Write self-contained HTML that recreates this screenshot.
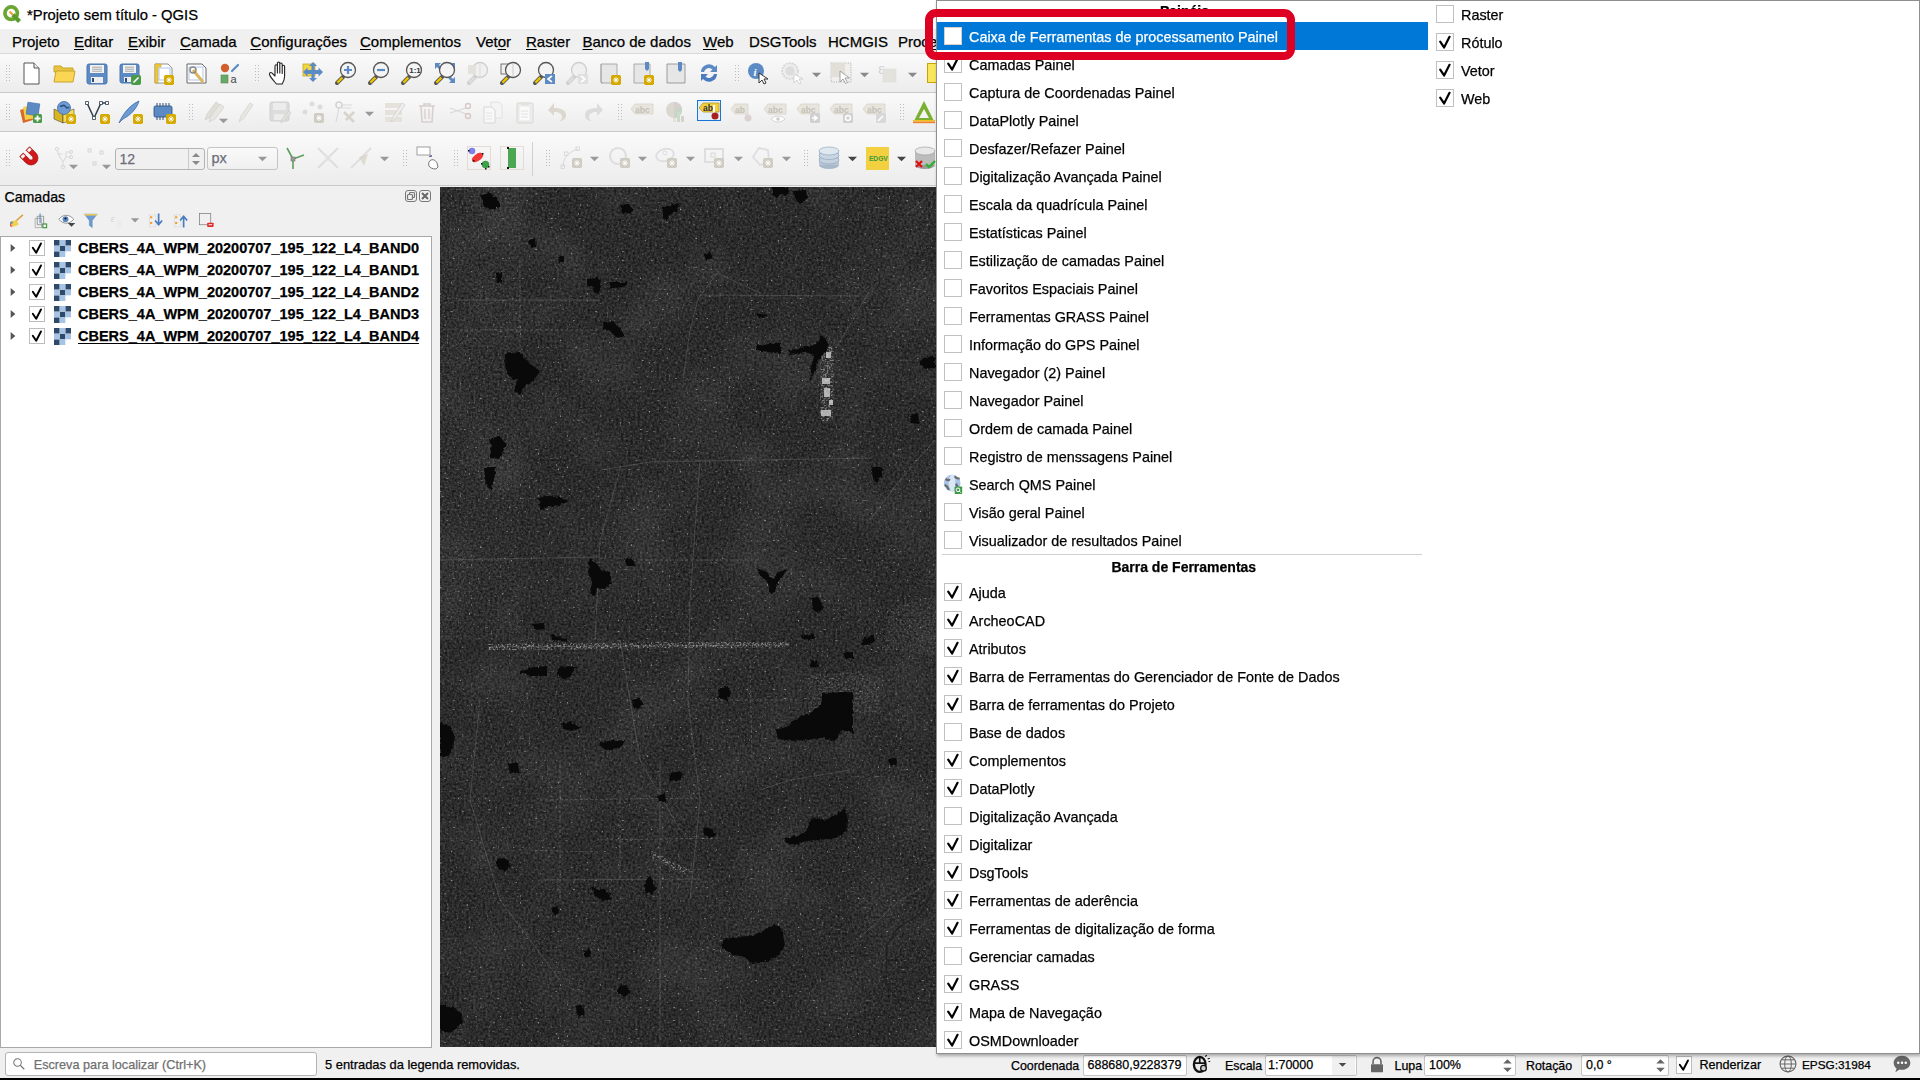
<!DOCTYPE html>
<html><head><meta charset="utf-8"><title>QGIS</title>
<style>
html,body{margin:0;padding:0;width:1920px;height:1080px;overflow:hidden;background:#f0f0f0;position:relative}
body{font-family:"Liberation Sans",sans-serif}
.t{position:absolute;white-space:nowrap;-webkit-text-stroke:0.25px currentColor}
.cb{position:absolute;background:#fff;border:1px solid #bdbdbd;box-sizing:border-box}
svg{position:absolute;overflow:visible}
</style></head><body>
<div style="position:absolute;left:0px;top:0px;width:1920px;height:29px;background:#fff"></div>
<svg style="left:1.50px;top:4.00px;" width="20" height="20" viewBox="0 0 24 24"><circle cx="11" cy="11" r="7.5" fill="none" stroke="#6aa632" stroke-width="4.5"/><path d="M13 13l8 8" stroke="#5a9a2a" stroke-width="5"/><path d="M9 9l4 4" stroke="#f0a030" stroke-width="2.5"/></svg>
<div class="t" style="left:27px;top:7.67px;font-size:14.8px;line-height:14.8px;color:#000;font-weight:400;">*Projeto sem título - QGIS</div>
<div style="position:absolute;left:0px;top:29px;width:1920px;height:24px;background:#f0f0f0"></div>
<div class="t" style="left:12px;top:33.80px;font-size:15px;line-height:15px;color:#000;font-weight:400;text-decoration-thickness:1px;text-underline-offset:2px;">Pro<u>j</u>eto</div>
<div class="t" style="left:74px;top:33.80px;font-size:15px;line-height:15px;color:#000;font-weight:400;text-decoration-thickness:1px;text-underline-offset:2px;"><u>E</u>ditar</div>
<div class="t" style="left:128px;top:33.80px;font-size:15px;line-height:15px;color:#000;font-weight:400;text-decoration-thickness:1px;text-underline-offset:2px;"><u>E</u>xibir</div>
<div class="t" style="left:180px;top:33.80px;font-size:15px;line-height:15px;color:#000;font-weight:400;text-decoration-thickness:1px;text-underline-offset:2px;"><u>C</u>amada</div>
<div class="t" style="left:250.3px;top:33.80px;font-size:15px;line-height:15px;color:#000;font-weight:400;text-decoration-thickness:1px;text-underline-offset:2px;"><u>C</u>onfigurações</div>
<div class="t" style="left:360px;top:33.80px;font-size:15px;line-height:15px;color:#000;font-weight:400;text-decoration-thickness:1px;text-underline-offset:2px;"><u>C</u>omplementos</div>
<div class="t" style="left:476px;top:33.80px;font-size:15px;line-height:15px;color:#000;font-weight:400;text-decoration-thickness:1px;text-underline-offset:2px;">Vet<u>o</u>r</div>
<div class="t" style="left:526px;top:33.80px;font-size:15px;line-height:15px;color:#000;font-weight:400;text-decoration-thickness:1px;text-underline-offset:2px;"><u>R</u>aster</div>
<div class="t" style="left:582.5px;top:33.80px;font-size:15px;line-height:15px;color:#000;font-weight:400;text-decoration-thickness:1px;text-underline-offset:2px;"><u>B</u>anco de dados</div>
<div class="t" style="left:703px;top:33.80px;font-size:15px;line-height:15px;color:#000;font-weight:400;text-decoration-thickness:1px;text-underline-offset:2px;"><u>W</u>eb</div>
<div class="t" style="left:749px;top:33.80px;font-size:15px;line-height:15px;color:#000;font-weight:400;text-decoration-thickness:1px;text-underline-offset:2px;">DSGTools</div>
<div class="t" style="left:828px;top:33.80px;font-size:15px;line-height:15px;color:#000;font-weight:400;text-decoration-thickness:1px;text-underline-offset:2px;">HCMGIS</div>
<div class="t" style="left:898px;top:33.80px;font-size:15px;line-height:15px;color:#000;font-weight:400;text-decoration-thickness:1px;text-underline-offset:2px;">Proc<u>e</u>ssar</div>
<div style="position:absolute;left:0px;top:53px;width:1920px;height:1px;background:#dadada"></div>
<div style="position:absolute;left:0px;top:54px;width:1920px;height:38px;background:linear-gradient(#fafafa,#ececec)"></div>
<div style="position:absolute;left:0px;top:92px;width:1920px;height:1px;background:#c9c9c9"></div>
<div style="position:absolute;left:0px;top:93px;width:1920px;height:38px;background:linear-gradient(#fafafa,#ececec)"></div>
<div style="position:absolute;left:0px;top:131px;width:1920px;height:1px;background:#c9c9c9"></div>
<div style="position:absolute;left:0px;top:132px;width:1920px;height:53px;background:linear-gradient(#fafafa,#ececec)"></div>
<div style="position:absolute;left:0px;top:185px;width:1920px;height:1px;background:#c9c9c9"></div>
<div style="position:absolute;left:6px;top:64.5px;width:1px;height:1px;background:#bcbcbc"></div><div style="position:absolute;left:6px;top:67.5px;width:1px;height:1px;background:#bcbcbc"></div><div style="position:absolute;left:6px;top:70.5px;width:1px;height:1px;background:#bcbcbc"></div><div style="position:absolute;left:6px;top:73.5px;width:1px;height:1px;background:#bcbcbc"></div><div style="position:absolute;left:6px;top:76.5px;width:1px;height:1px;background:#bcbcbc"></div><div style="position:absolute;left:6px;top:79.5px;width:1px;height:1px;background:#bcbcbc"></div><div style="position:absolute;left:9px;top:64.5px;width:1px;height:1px;background:#bcbcbc"></div><div style="position:absolute;left:9px;top:67.5px;width:1px;height:1px;background:#bcbcbc"></div><div style="position:absolute;left:9px;top:70.5px;width:1px;height:1px;background:#bcbcbc"></div><div style="position:absolute;left:9px;top:73.5px;width:1px;height:1px;background:#bcbcbc"></div><div style="position:absolute;left:9px;top:76.5px;width:1px;height:1px;background:#bcbcbc"></div><div style="position:absolute;left:9px;top:79.5px;width:1px;height:1px;background:#bcbcbc"></div>
<svg style="left:19.00px;top:61.00px;" width="24" height="24" viewBox="0 0 24 24"><path d="M5 2h10l5 5v16H5z" fill="#fff" stroke="#555" stroke-width="1"/><path d="M15 2v5h5" fill="#eee" stroke="#555" stroke-width="1"/></svg>
<svg style="left:52.00px;top:61.00px;" width="24" height="24" viewBox="0 0 24 24"><path d="M2 5h7l2 2h10v4H2z" fill="#e8c440" stroke="#c9a42a"/><path d="M2 21l2-11h19l-2 11z" fill="#fad654" stroke="#c9a42a"/></svg>
<svg style="left:85.00px;top:61.00px;" width="24" height="24" viewBox="0 0 24 24"><rect x="2" y="3" width="20" height="20" rx="2" fill="#5b8ac4" stroke="#4a76ae"/><rect x="5" y="4" width="14" height="8" fill="#f2f2f2"/><path d="M7 6.2h10M7 8.2h10M7 10.2h10" stroke="#777" stroke-width="0.6"/><rect x="6" y="16" width="12" height="6" fill="#eee"/><rect x="7" y="17" width="2" height="4" fill="#2d4d7a"/></svg>
<svg style="left:118.00px;top:61.00px;" width="24" height="24" viewBox="0 0 24 24"><rect x="2" y="3" width="19" height="19" rx="2" fill="#5b8ac4" stroke="#4a76ae"/><rect x="5" y="4" width="13" height="8" fill="#f2f2f2"/><path d="M7 6.2h9M7 8.2h9M7 10.2h9" stroke="#777" stroke-width="0.6"/><rect x="6" y="16" width="11" height="5" fill="#eee"/><rect x="7" y="17" width="2" height="4" fill="#2d4d7a"/><rect x="13" y="14" width="10" height="10" rx="2" fill="#4a9a4a"/><path d="M15.5 21.5l5-5" stroke="#fff" stroke-width="1.6"/></svg>
<svg style="left:151.00px;top:61.00px;" width="24" height="24" viewBox="0 0 24 24"><path d="M4 3h13l4 4v15H4z" fill="#fff" stroke="#777" stroke-width="0.8"/><path d="M4 3h6v3h-3v16H4z" fill="#efc83a" stroke="#c9a42a" stroke-width="0.6"/><rect x="8" y="7" width="11" height="12" fill="none" stroke="#9cb8e4" stroke-width="0.8"/><rect x="13" y="14" width="10" height="10" rx="1.8" fill="#d4a900"/><path d="M18 16v6M15 19h6M15.9 16.9l4.2 4.2M15.9 21.1l4.2 -4.2" stroke="#fff" stroke-width="0.9" fill="none"/></svg>
<svg style="left:184.00px;top:61.00px;" width="24" height="24" viewBox="0 0 24 24"><path d="M3 3h15l4 4v15H3z" fill="#fff" stroke="#666" stroke-width="1"/><rect x="5" y="6" width="14" height="13" fill="none" stroke="#9cb8e4" stroke-width="0.8"/><path d="M9 9l10 12" stroke="#d9b55c" stroke-width="3"/><circle cx="9" cy="9" r="3" fill="none" stroke="#888" stroke-width="1.4"/></svg>
<svg style="left:217.00px;top:61.00px;" width="24" height="24" viewBox="0 0 24 24"><circle cx="8" cy="7" r="4.2" fill="#d3602c"/><path d="M15 10l6-6" stroke="#5b8ac4" stroke-width="2.2" stroke-linecap="round"/><rect x="4" y="14" width="7" height="8" fill="#6aa86a" stroke="#4a8a4a" stroke-width="0.6"/><text x="13.5" y="22" font-size="11" font-family="Liberation Sans" fill="#444">a</text></svg>

<div style="position:absolute;left:255px;top:64.5px;width:1px;height:1px;background:#bcbcbc"></div><div style="position:absolute;left:255px;top:67.5px;width:1px;height:1px;background:#bcbcbc"></div><div style="position:absolute;left:255px;top:70.5px;width:1px;height:1px;background:#bcbcbc"></div><div style="position:absolute;left:255px;top:73.5px;width:1px;height:1px;background:#bcbcbc"></div><div style="position:absolute;left:255px;top:76.5px;width:1px;height:1px;background:#bcbcbc"></div><div style="position:absolute;left:255px;top:79.5px;width:1px;height:1px;background:#bcbcbc"></div><div style="position:absolute;left:258px;top:64.5px;width:1px;height:1px;background:#bcbcbc"></div><div style="position:absolute;left:258px;top:67.5px;width:1px;height:1px;background:#bcbcbc"></div><div style="position:absolute;left:258px;top:70.5px;width:1px;height:1px;background:#bcbcbc"></div><div style="position:absolute;left:258px;top:73.5px;width:1px;height:1px;background:#bcbcbc"></div><div style="position:absolute;left:258px;top:76.5px;width:1px;height:1px;background:#bcbcbc"></div><div style="position:absolute;left:258px;top:79.5px;width:1px;height:1px;background:#bcbcbc"></div>
<svg style="left:268.00px;top:61.00px;" width="24" height="24" viewBox="0 0 24 24"><path d="M8.5 23c-2.5-3-6-6.5-7-9.5-.4-1.6 1.2-2.6 2.6-1.4L7 15V5c0-1.6 2.4-1.6 2.4 0v7V2.2c0-1.6 2.4-1.6 2.4 0V12V3.2c0-1.6 2.4-1.6 2.4 0V12.5V5.5c0-1.6 2.4-1.6 2.4 0v9.5c0 3.5-1.2 6-2.4 8z" fill="#fff" stroke="#222" stroke-width="1.1" stroke-linejoin="round"/></svg>
<svg style="left:301.00px;top:61.00px;" width="24" height="24" viewBox="0 0 24 24"><rect x="2" y="3" width="12" height="12" fill="#f2d640" stroke="#c9a42a" stroke-width="0.8"/><path d="M12 1l4 4h-2.5v4h4V6.5L22 11l-4.5 4.5V13h-4v4H16l-4 4-4-4h2.5v-4h-4v2.5L2 11l4.5-4.5V9h4V5H8z" fill="#5b8ac4"/></svg>
<svg style="left:334.00px;top:61.00px;" width="24" height="24" viewBox="0 0 24 24"><path d="M3 22l6-6" stroke="#555" stroke-width="4" stroke-linecap="round"/><path d="M3.4 21.6l5-5" stroke="#e8c200" stroke-width="2.4"/><circle cx="14" cy="9" r="7.5" fill="#f4f4f4" stroke="#555" stroke-width="1.3"/><path d="M14 5v8M10 9h8" stroke="#5b8ac4" stroke-width="2.2"/></svg>
<svg style="left:367.00px;top:61.00px;" width="24" height="24" viewBox="0 0 24 24"><path d="M3 22l6-6" stroke="#555" stroke-width="4" stroke-linecap="round"/><path d="M3.4 21.6l5-5" stroke="#e8c200" stroke-width="2.4"/><circle cx="14" cy="9" r="7.5" fill="#f4f4f4" stroke="#555" stroke-width="1.3"/><path d="M10 9h8" stroke="#5b8ac4" stroke-width="2.2"/></svg>
<svg style="left:400.00px;top:61.00px;" width="24" height="24" viewBox="0 0 24 24"><path d="M3 22l6-6" stroke="#555" stroke-width="4" stroke-linecap="round"/><path d="M3.4 21.6l5-5" stroke="#e8c200" stroke-width="2.4"/><circle cx="14" cy="9" r="7.5" fill="#f4f4f4" stroke="#555" stroke-width="1.3"/><text x="9.2" y="12.3" font-size="8" font-weight="700" font-family="Liberation Sans" fill="#333">1:1</text></svg>
<svg style="left:433.00px;top:61.00px;" width="24" height="24" viewBox="0 0 24 24"><path d="M2 2h6l-2 2 3 3-2 2-3-3-2 2zM22 2v6l-2-2-3 3-2-2 3-3-2-2zM22 22h-6l2-2-3-3 2-2 3 3 2-2z" fill="#5b8ac4"/><path d="M3 22l6-6" stroke="#555" stroke-width="4" stroke-linecap="round"/><path d="M3.4 21.6l5-5" stroke="#e8c200" stroke-width="2.4"/><circle cx="14" cy="9" r="7.5" fill="#f4f4f4" stroke="#555" stroke-width="1.3"/></svg>
<svg style="left:466.00px;top:61.00px;" width="24" height="24" viewBox="0 0 24 24"><path d="M3 22l6-6" stroke="#cfcfcf" stroke-width="4" stroke-linecap="round"/><path d="M3.4 21.6l5-5" stroke="#dedede" stroke-width="2.4"/><circle cx="14" cy="9" r="7.5" fill="#f0f0f0" stroke="#cfcfcf" stroke-width="1.3"/><rect x="2" y="4" width="8" height="9" fill="#e4e2dc"/><path d="M14 2v14" stroke="#ddd"/></svg>
<svg style="left:499.00px;top:61.00px;" width="24" height="24" viewBox="0 0 24 24"><rect x="2" y="3" width="9" height="10" fill="#f0f0f0" stroke="#555" stroke-width="0.8"/><path d="M3 22l6-6" stroke="#555" stroke-width="4" stroke-linecap="round"/><path d="M3.4 21.6l5-5" stroke="#e8c200" stroke-width="2.4"/><circle cx="14" cy="9" r="7.5" fill="#f4f4f4" stroke="#555" stroke-width="1.3"/><path d="M14 2v14" stroke="#ccc"/></svg>
<svg style="left:532.00px;top:61.00px;" width="24" height="24" viewBox="0 0 24 24"><path d="M3 22l6-6" stroke="#555" stroke-width="4" stroke-linecap="round"/><path d="M3.4 21.6l5-5" stroke="#e8c200" stroke-width="2.4"/><circle cx="14" cy="9" r="7.5" fill="#f4f4f4" stroke="#555" stroke-width="1.3"/><rect x="13" y="13" width="10" height="10" fill="#5b8ac4"/><path d="M20 15l-4 3 4 3" stroke="#fff" stroke-width="1.6" fill="none"/></svg>
<svg style="left:565.00px;top:61.00px;" width="24" height="24" viewBox="0 0 24 24"><path d="M3 22l6-6" stroke="#cfcfcf" stroke-width="4" stroke-linecap="round"/><path d="M3.4 21.6l5-5" stroke="#dedede" stroke-width="2.4"/><circle cx="14" cy="9" r="7.5" fill="#f0f0f0" stroke="#cfcfcf" stroke-width="1.3"/><rect x="13" y="13" width="10" height="10" fill="#e0e0e0"/><path d="M16 15l4 3-4 3" stroke="#fff" stroke-width="1.6" fill="none"/></svg>
<svg style="left:598.00px;top:61.00px;" width="24" height="24" viewBox="0 0 24 24"><path d="M3 3h16v19H3z" fill="#e6e6e6" stroke="#999" stroke-width="0.8"/><path d="M3 3v17c0 1 1 2 2 2" fill="none" stroke="#aaa"/><rect x="13" y="14" width="10" height="10" rx="1.8" fill="#d4a900"/><path d="M18 16v6M15 19h6M15.9 16.9l4.2 4.2M15.9 21.1l4.2 -4.2" stroke="#fff" stroke-width="0.9" fill="none"/></svg>
<svg style="left:631.00px;top:61.00px;" width="24" height="24" viewBox="0 0 24 24"><path d="M3 3h16v19H3z" fill="#e6e6e6" stroke="#999" stroke-width="0.8"/><path d="M14 1h4v7l-2 2-2-2z" fill="#5b8ac4"/><rect x="13" y="14" width="10" height="10" rx="1.8" fill="#d4a900"/><path d="M18 16v6M15 19h6M15.9 16.9l4.2 4.2M15.9 21.1l4.2 -4.2" stroke="#fff" stroke-width="0.9" fill="none"/></svg>
<svg style="left:664.00px;top:61.00px;" width="24" height="24" viewBox="0 0 24 24"><path d="M3 3h18v19H3z" fill="#e6e6e6" stroke="#888" stroke-width="0.8"/><path d="M14 1h4v8l-2 2-2-2z" fill="#5b8ac4"/></svg>
<svg style="left:697.00px;top:61.00px;" width="24" height="24" viewBox="0 0 24 24"><path d="M4 11a8 8 0 0 1 14-5l2-2v7h-7l2.5-2.5A5 5 0 0 0 7 11z" fill="#5b8ac4"/><path d="M20 13a8 8 0 0 1-14 5l-2 2v-7h7l-2.5 2.5A5 5 0 0 0 17 13z" fill="#4a7bc0"/></svg>
<div style="position:absolute;left:735px;top:64.5px;width:1px;height:1px;background:#bcbcbc"></div><div style="position:absolute;left:735px;top:67.5px;width:1px;height:1px;background:#bcbcbc"></div><div style="position:absolute;left:735px;top:70.5px;width:1px;height:1px;background:#bcbcbc"></div><div style="position:absolute;left:735px;top:73.5px;width:1px;height:1px;background:#bcbcbc"></div><div style="position:absolute;left:735px;top:76.5px;width:1px;height:1px;background:#bcbcbc"></div><div style="position:absolute;left:735px;top:79.5px;width:1px;height:1px;background:#bcbcbc"></div><div style="position:absolute;left:738px;top:64.5px;width:1px;height:1px;background:#bcbcbc"></div><div style="position:absolute;left:738px;top:67.5px;width:1px;height:1px;background:#bcbcbc"></div><div style="position:absolute;left:738px;top:70.5px;width:1px;height:1px;background:#bcbcbc"></div><div style="position:absolute;left:738px;top:73.5px;width:1px;height:1px;background:#bcbcbc"></div><div style="position:absolute;left:738px;top:76.5px;width:1px;height:1px;background:#bcbcbc"></div><div style="position:absolute;left:738px;top:79.5px;width:1px;height:1px;background:#bcbcbc"></div>
<svg style="left:747.00px;top:61.00px;" width="24" height="24" viewBox="0 0 24 24"><circle cx="9" cy="10" r="8" fill="#5b8ac4"/><text x="6.5" y="15" font-size="11" font-style="italic" font-weight="700" font-family="Liberation Serif" fill="#fff">i</text><path d="M12 12l0 10 3-3 2 4 2-1-2-4h4z" fill="#fff" stroke="#222" stroke-width="0.9"/></svg>
<svg style="left:780.00px;top:61.00px;" width="24" height="24" viewBox="0 0 24 24"><circle cx="10" cy="10" r="8" fill="#ececec" stroke="#d4d4d4" stroke-width="1.5" stroke-dasharray="2 1"/><circle cx="10" cy="10" r="4.5" fill="#dcdcdc"/><path d="M14 13l0 9 3-3 2 4 2-1-2-4h4z" fill="#fff" stroke="#d0d0d0" stroke-width="0.9"/></svg>
<svg style="left:810.50px;top:68.50px;color:#8a8a8a;" width="11" height="11" viewBox="0 0 24 24"><path d="M2 8h20l-10 10z" fill="currentColor"/></svg>
<svg style="left:829.00px;top:61.00px;" width="24" height="24" viewBox="0 0 24 24"><rect x="2" y="2" width="20" height="19" fill="#f0efeb" stroke="#aaa" stroke-width="0.8" stroke-dasharray="1.2 1.2"/><rect x="2" y="2" width="14" height="14" fill="#e2dfd8"/><path d="M11 10l0 11 3-3 2.5 4.5 2-1L16 17h4.5z" fill="#fff" stroke="#999" stroke-width="0.9"/></svg>
<svg style="left:859.00px;top:68.50px;color:#8a8a8a;" width="11" height="11" viewBox="0 0 24 24"><path d="M2 8h20l-10 10z" fill="currentColor"/></svg>
<svg style="left:877.00px;top:61.00px;" width="24" height="24" viewBox="0 0 24 24"><text x="1" y="13" font-size="16" font-family="Liberation Serif" fill="#d0d0d0">&#949;</text><rect x="6" y="8" width="13" height="13" fill="#e4e2dc" stroke="#ddd" stroke-width="0.6"/></svg>
<svg style="left:907.10px;top:68.50px;color:#8a8a8a;" width="11" height="11" viewBox="0 0 24 24"><path d="M2 8h20l-10 10z" fill="currentColor"/></svg>
<div style="position:absolute;left:927px;top:63px;width:10px;height:20px;background:#fae65a;border:1px solid #c9a400;box-sizing:border-box"></div>
<div style="position:absolute;left:6px;top:103.5px;width:1px;height:1px;background:#bcbcbc"></div><div style="position:absolute;left:6px;top:106.5px;width:1px;height:1px;background:#bcbcbc"></div><div style="position:absolute;left:6px;top:109.5px;width:1px;height:1px;background:#bcbcbc"></div><div style="position:absolute;left:6px;top:112.5px;width:1px;height:1px;background:#bcbcbc"></div><div style="position:absolute;left:6px;top:115.5px;width:1px;height:1px;background:#bcbcbc"></div><div style="position:absolute;left:6px;top:118.5px;width:1px;height:1px;background:#bcbcbc"></div><div style="position:absolute;left:9px;top:103.5px;width:1px;height:1px;background:#bcbcbc"></div><div style="position:absolute;left:9px;top:106.5px;width:1px;height:1px;background:#bcbcbc"></div><div style="position:absolute;left:9px;top:109.5px;width:1px;height:1px;background:#bcbcbc"></div><div style="position:absolute;left:9px;top:112.5px;width:1px;height:1px;background:#bcbcbc"></div><div style="position:absolute;left:9px;top:115.5px;width:1px;height:1px;background:#bcbcbc"></div><div style="position:absolute;left:9px;top:118.5px;width:1px;height:1px;background:#bcbcbc"></div>
<svg style="left:19.00px;top:100.00px;" width="24" height="24" viewBox="0 0 24 24"><path d="M1 10l10-3 3 13-10 3z" fill="#d9682c"/><path d="M4 7l10-2 2 13-10 2z" fill="#f2d04a"/><path d="M8 3h12v12H8z" transform="rotate(8 14 9)" fill="#5b8ac4" stroke="#3d6aa4" stroke-width="0.6"/><rect x="14" y="14" width="9" height="9" rx="1.5" fill="#4a9a4a"/><path d="M18.5 15.5v6M15.5 18.5h6" stroke="#fff" stroke-width="1.8"/></svg>
<svg style="left:52.00px;top:100.00px;" width="24" height="24" viewBox="0 0 24 24"><path d="M2 9l9 4v10l-9-4z" fill="#d8b420" stroke="#333" stroke-width="0.5"/><path d="M11 13l11-4v10l-11 4z" fill="#f4dc5a" stroke="#333" stroke-width="0.5"/><circle cx="12" cy="8" r="6.5" fill="#6d9bd4" stroke="#3d6aa4" stroke-width="0.8"/><path d="M8 6c2 1 3-2 5 0s2 3 4 1" stroke="#2d4d7a" stroke-width="1.5" fill="none"/><rect x="14" y="14" width="10" height="10" rx="1.8" fill="#d4a900"/><path d="M19 16v6M16 19h6M16.9 16.9l4.2 4.2M16.9 21.1l4.2 -4.2" stroke="#fff" stroke-width="0.9" fill="none"/></svg>
<svg style="left:85.00px;top:100.00px;" width="24" height="24" viewBox="0 0 24 24"><path d="M2 3l7 15 7-15 6 0" fill="none" stroke="#2d3d4d" stroke-width="1.5"/><path d="M0.5 1.5h3v3h-3zM14.5 1.5h3v3h-3zM20.5 1.5h3v3h-3zM7.5 16.5h3v3h-3z" fill="#fff" stroke="#2d3d4d" stroke-width="0.8"/><rect x="15" y="14" width="10" height="10" rx="1.8" fill="#d4a900"/><path d="M20 16v6M17 19h6M17.9 16.9l4.2 4.2M17.9 21.1l4.2 -4.2" stroke="#fff" stroke-width="0.9" fill="none"/></svg>
<svg style="left:118.00px;top:100.00px;" width="24" height="24" viewBox="0 0 24 24"><path d="M1 23C4 16 10 6 21 1c-2 7-8 14-16 18z" fill="#6d9bd4" stroke="#3d6aa4" stroke-width="0.8"/><rect x="15" y="14" width="10" height="10" rx="1.8" fill="#d4a900"/><path d="M20 16v6M17 19h6M17.9 16.9l4.2 4.2M17.9 21.1l4.2 -4.2" stroke="#fff" stroke-width="0.9" fill="none"/></svg>
<svg style="left:152.00px;top:100.00px;" width="24" height="24" viewBox="0 0 24 24"><rect x="2" y="6" width="18" height="11" rx="1.5" fill="#5b8ac4" stroke="#2d4d7a" stroke-width="0.8"/><path d="M5 3v3M8 3v3M11 3v3M14 3v3M17 3v3M5 17v3M8 17v3M11 17v3" stroke="#2d4d7a" stroke-width="1"/><rect x="14" y="14" width="10" height="10" rx="1.8" fill="#d4a900"/><path d="M19 16v6M16 19h6M16.9 16.9l4.2 4.2M16.9 21.1l4.2 -4.2" stroke="#fff" stroke-width="0.9" fill="none"/></svg>
<div style="position:absolute;left:189px;top:103.5px;width:1px;height:1px;background:#bcbcbc"></div><div style="position:absolute;left:189px;top:106.5px;width:1px;height:1px;background:#bcbcbc"></div><div style="position:absolute;left:189px;top:109.5px;width:1px;height:1px;background:#bcbcbc"></div><div style="position:absolute;left:189px;top:112.5px;width:1px;height:1px;background:#bcbcbc"></div><div style="position:absolute;left:189px;top:115.5px;width:1px;height:1px;background:#bcbcbc"></div><div style="position:absolute;left:189px;top:118.5px;width:1px;height:1px;background:#bcbcbc"></div><div style="position:absolute;left:192px;top:103.5px;width:1px;height:1px;background:#bcbcbc"></div><div style="position:absolute;left:192px;top:106.5px;width:1px;height:1px;background:#bcbcbc"></div><div style="position:absolute;left:192px;top:109.5px;width:1px;height:1px;background:#bcbcbc"></div><div style="position:absolute;left:192px;top:112.5px;width:1px;height:1px;background:#bcbcbc"></div><div style="position:absolute;left:192px;top:115.5px;width:1px;height:1px;background:#bcbcbc"></div><div style="position:absolute;left:192px;top:118.5px;width:1px;height:1px;background:#bcbcbc"></div>
<svg style="left:202.00px;top:100.00px;" width="24" height="24" viewBox="0 0 24 24"><path d="M3 20l2-6 9-12 4 3-9 12z" fill="#e0ded8" stroke="#d4d2cc" stroke-width="0.8"/><path d="M7 22l2-6 9-12 4 3-9 12z" fill="#e8e6e0" stroke="#d4d2cc" stroke-width="0.8"/></svg>
<svg style="left:218.10px;top:114.50px;color:#999;" width="11" height="11" viewBox="0 0 24 24"><path d="M2 8h20l-10 10z" fill="currentColor"/></svg>
<svg style="left:234.00px;top:100.00px;" width="24" height="24" viewBox="0 0 24 24"><path d="M5 22l2-6 9-13 3 2-9 13z" fill="#e8e6e0" stroke="#d8d6d0" stroke-width="0.9"/></svg>
<svg style="left:268.00px;top:100.00px;" width="24" height="24" viewBox="0 0 24 24"><rect x="2" y="2" width="19" height="19" rx="2" fill="#dcdcdc" stroke="#d0d0d0"/><rect x="5" y="3" width="13" height="7" fill="#ececec"/><rect x="6" y="14" width="10" height="6" fill="#ececec"/><path d="M13 23l1-4 7-8 2 2-7 8z" fill="#e2e0da" stroke="#d0cec8" stroke-width="0.7"/></svg>
<svg style="left:301.00px;top:100.00px;" width="24" height="24" viewBox="0 0 24 24"><circle cx="4" cy="12" r="2.5" fill="#dcdcdc"/><circle cx="11" cy="4" r="2.5" fill="#dcdcdc"/><circle cx="19" cy="7" r="2.5" fill="#dcdcdc"/><rect x="13" y="13" width="10" height="10" rx="1.8" fill="#cfccc4"/><path d="M18 15v6M15 18h6M15.9 15.9l4.2 4.2M15.9 20.1l4.2 -4.2" stroke="#fff" stroke-width="0.9" fill="none"/></svg>
<svg style="left:333.00px;top:100.00px;" width="24" height="24" viewBox="0 0 24 24"><circle cx="6" cy="5" r="3" fill="none" stroke="#d4d4d4" stroke-width="1.5"/><path d="M6 8l-3 14M9 5h10M9 8h9" stroke="#d8d8d8" stroke-width="1"/><path d="M11 12l10 10M21 12l-8 8" stroke="#d8d4cc" stroke-width="2.6"/></svg>
<svg style="left:363.50px;top:107.50px;color:#999;" width="11" height="11" viewBox="0 0 24 24"><path d="M2 8h20l-10 10z" fill="currentColor"/></svg>
<svg style="left:382.00px;top:100.00px;" width="24" height="24" viewBox="0 0 24 24"><rect x="3" y="3" width="17" height="5" fill="#e4e2da"/><rect x="3" y="10" width="17" height="5" fill="#e4e2da"/><rect x="3" y="17" width="17" height="5" fill="#e4e2da"/><path d="M9 22l2-5 9-14 3 2-9 13z" fill="#eee" stroke="#d0d0d0" stroke-width="0.8"/></svg>
<svg style="left:415.00px;top:100.00px;" width="24" height="24" viewBox="0 0 24 24"><path d="M4 6h16M9 6V4h6v2M6 6l1 16h10l1-16" fill="none" stroke="#d8cfcf" stroke-width="1.6"/><path d="M10 9v10M14 9v10" stroke="#d8cfcf" stroke-width="1.4"/></svg>
<svg style="left:448.00px;top:100.00px;" width="24" height="24" viewBox="0 0 24 24"><path d="M2 8l16 6M2 13l16-5" stroke="#d8d8d8" stroke-width="1.2"/><circle cx="20" cy="6" r="2.5" fill="none" stroke="#d8c8c8" stroke-width="1.4"/><circle cx="20" cy="16" r="2.5" fill="none" stroke="#d8c8c8" stroke-width="1.4"/></svg>
<svg style="left:481.00px;top:100.00px;" width="24" height="24" viewBox="0 0 24 24"><path d="M10 2h8l3 3v13H10z" fill="#f4f4f4" stroke="#ddd" stroke-width="0.8"/><path d="M3 7h8l3 3v13H3z" fill="#f8f8f8" stroke="#d4d4d4" stroke-width="0.9"/><path d="M5 13h6M5 16h6M5 19h6" stroke="#ddd" stroke-width="0.8"/></svg>
<svg style="left:514.00px;top:100.00px;" width="24" height="24" viewBox="0 0 24 24"><rect x="3" y="3" width="16" height="20" rx="1" fill="#eee" stroke="#d4d2cc" stroke-width="0.9"/><rect x="5" y="6" width="11" height="15" fill="#fafafa" stroke="#ddd" stroke-width="0.6"/><rect x="7" y="2" width="8" height="3" fill="#e4e2dc"/><path d="M7 11h7M7 14h7M7 17h7" stroke="#ddd" stroke-width="0.8"/></svg>
<svg style="left:547.00px;top:100.00px;" width="24" height="24" viewBox="0 0 24 24"><path d="M7 3L1 10l6 6v-4c5 0 8 2 8 5s-3 4-3 4c4 0 7-2 7-6 0-5-5-7-12-7z" fill="#dcd8d0"/></svg>
<svg style="left:580.00px;top:100.00px;" width="24" height="24" viewBox="0 0 24 24"><path d="M17 3l6 7-6 6v-4c-5 0-8 2-8 5s3 4 3 4c-4 0-7-2-7-6 0-5 5-7 12-7z" fill="#dcdcdc"/></svg>
<div style="position:absolute;left:618px;top:103.5px;width:1px;height:1px;background:#bcbcbc"></div><div style="position:absolute;left:618px;top:106.5px;width:1px;height:1px;background:#bcbcbc"></div><div style="position:absolute;left:618px;top:109.5px;width:1px;height:1px;background:#bcbcbc"></div><div style="position:absolute;left:618px;top:112.5px;width:1px;height:1px;background:#bcbcbc"></div><div style="position:absolute;left:618px;top:115.5px;width:1px;height:1px;background:#bcbcbc"></div><div style="position:absolute;left:618px;top:118.5px;width:1px;height:1px;background:#bcbcbc"></div><div style="position:absolute;left:621px;top:103.5px;width:1px;height:1px;background:#bcbcbc"></div><div style="position:absolute;left:621px;top:106.5px;width:1px;height:1px;background:#bcbcbc"></div><div style="position:absolute;left:621px;top:109.5px;width:1px;height:1px;background:#bcbcbc"></div><div style="position:absolute;left:621px;top:112.5px;width:1px;height:1px;background:#bcbcbc"></div><div style="position:absolute;left:621px;top:115.5px;width:1px;height:1px;background:#bcbcbc"></div><div style="position:absolute;left:621px;top:118.5px;width:1px;height:1px;background:#bcbcbc"></div>
<svg style="left:630.00px;top:100.00px;" width="24" height="24" viewBox="0 0 24 24"><path d="M1 9l4-5h18v10H5z" fill="#e8e5dd" stroke="#d8d4cc" stroke-width="0.8"/><text x="5" y="12.5" font-size="8.5" font-weight="700" font-family="Liberation Sans" fill="#c4c0b8">abc</text></svg>
<svg style="left:664.00px;top:100.00px;" width="24" height="24" viewBox="0 0 24 24"><circle cx="10" cy="10" r="8" fill="#dcd8d0"/><path d="M10 10V2a8 8 0 0 1 7.5 5z" fill="#d8cfcf"/><path d="M10 10l7.5-3A8 8 0 0 1 10 18z" fill="#c8d4c8"/><rect x="13" y="12" width="3" height="10" fill="#c8dcc8"/><rect x="17" y="16" width="3" height="6" fill="#d8cfcf"/><rect x="9" y="18" width="3" height="4" fill="#e4e2da"/></svg>
<svg style="left:697.00px;top:100.00px;" width="24" height="24" viewBox="0 0 24 24"><rect x="0.5" y="0.5" width="23" height="20" fill="#e6f0fb" stroke="#1a74d8" stroke-width="1"/><path d="M2 8l4-5h16v9H6z" fill="#f2d040" stroke="#b89820" stroke-width="0.8"/><text x="6" y="11" font-size="8.5" font-weight="700" font-family="Liberation Sans" fill="#333">ab</text><path d="M17 5v8" stroke="#fff" stroke-width="2"/><circle cx="18" cy="16" r="3.5" fill="#a82020"/></svg>
<svg style="left:730.00px;top:100.00px;" width="24" height="24" viewBox="0 0 24 24"><path d="M1 9l4-5h13v10H5z" fill="#e8e5dd" stroke="#d8d4cc" stroke-width="0.8"/><text x="5" y="12.5" font-size="8.5" font-weight="700" font-family="Liberation Sans" fill="#c4c0b8">ab</text><circle cx="18" cy="18" r="3.5" fill="#dcd0d0"/></svg>
<svg style="left:763.00px;top:100.00px;" width="24" height="24" viewBox="0 0 24 24"><path d="M1 9l4-5h18v10H5z" fill="#e8e5dd" stroke="#d8d4cc" stroke-width="0.8"/><text x="5" y="12.5" font-size="8.5" font-weight="700" font-family="Liberation Sans" fill="#c4c0b8">abc</text><path d="M8 19c4-4 10-4 14 0-4 4-10 4-14 0z" fill="#fff" stroke="#d4d4d4"/><circle cx="15" cy="19" r="1.8" fill="#ccc"/></svg>
<svg style="left:796.00px;top:100.00px;" width="24" height="24" viewBox="0 0 24 24"><path d="M1 9l4-5h18v10H5z" fill="#e8e5dd" stroke="#d8d4cc" stroke-width="0.8"/><text x="5" y="12.5" font-size="8.5" font-weight="700" font-family="Liberation Sans" fill="#c4c0b8">abc</text><rect x="14" y="13" width="10" height="10" rx="1.5" fill="#d0d0d0"/><path d="M16 18h4M18 15.5l3 2.5-3 2.5" stroke="#fff" stroke-width="1.6" fill="none"/></svg>
<svg style="left:829.00px;top:100.00px;" width="24" height="24" viewBox="0 0 24 24"><path d="M1 9l4-5h18v10H5z" fill="#e8e5dd" stroke="#d8d4cc" stroke-width="0.8"/><text x="5" y="12.5" font-size="8.5" font-weight="700" font-family="Liberation Sans" fill="#c4c0b8">abc</text><rect x="14" y="13" width="10" height="10" rx="1.5" fill="#d0d0d0"/><circle cx="19" cy="18" r="2.5" fill="none" stroke="#fff" stroke-width="1.4"/></svg>
<svg style="left:862.00px;top:100.00px;" width="24" height="24" viewBox="0 0 24 24"><path d="M1 9l4-5h18v10H5z" fill="#e8e5dd" stroke="#d8d4cc" stroke-width="0.8"/><text x="5" y="12.5" font-size="8.5" font-weight="700" font-family="Liberation Sans" fill="#c4c0b8">abc</text><rect x="14" y="13" width="10" height="10" rx="1.5" fill="#d8d8d8"/><path d="M16 21l5-5" stroke="#fff" stroke-width="1.6"/></svg>
<div style="position:absolute;left:900px;top:103.5px;width:1px;height:1px;background:#bcbcbc"></div><div style="position:absolute;left:900px;top:106.5px;width:1px;height:1px;background:#bcbcbc"></div><div style="position:absolute;left:900px;top:109.5px;width:1px;height:1px;background:#bcbcbc"></div><div style="position:absolute;left:900px;top:112.5px;width:1px;height:1px;background:#bcbcbc"></div><div style="position:absolute;left:900px;top:115.5px;width:1px;height:1px;background:#bcbcbc"></div><div style="position:absolute;left:900px;top:118.5px;width:1px;height:1px;background:#bcbcbc"></div><div style="position:absolute;left:903px;top:103.5px;width:1px;height:1px;background:#bcbcbc"></div><div style="position:absolute;left:903px;top:106.5px;width:1px;height:1px;background:#bcbcbc"></div><div style="position:absolute;left:903px;top:109.5px;width:1px;height:1px;background:#bcbcbc"></div><div style="position:absolute;left:903px;top:112.5px;width:1px;height:1px;background:#bcbcbc"></div><div style="position:absolute;left:903px;top:115.5px;width:1px;height:1px;background:#bcbcbc"></div><div style="position:absolute;left:903px;top:118.5px;width:1px;height:1px;background:#bcbcbc"></div>
<svg style="left:913.00px;top:100.00px;" width="24" height="24" viewBox="0 0 24 24"><path d="M11 1L1 21h20z" fill="#7ab030"/><path d="M11 9l-5 9h10z" fill="#f4f4f4"/><rect x="0" y="20" width="22" height="1.6" fill="#f0c020"/><rect x="0" y="21.6" width="22" height="1.6" fill="#f08030"/></svg>
<div style="position:absolute;left:6px;top:149.5px;width:1px;height:1px;background:#bcbcbc"></div><div style="position:absolute;left:6px;top:152.5px;width:1px;height:1px;background:#bcbcbc"></div><div style="position:absolute;left:6px;top:155.5px;width:1px;height:1px;background:#bcbcbc"></div><div style="position:absolute;left:6px;top:158.5px;width:1px;height:1px;background:#bcbcbc"></div><div style="position:absolute;left:6px;top:161.5px;width:1px;height:1px;background:#bcbcbc"></div><div style="position:absolute;left:6px;top:164.5px;width:1px;height:1px;background:#bcbcbc"></div><div style="position:absolute;left:9px;top:149.5px;width:1px;height:1px;background:#bcbcbc"></div><div style="position:absolute;left:9px;top:152.5px;width:1px;height:1px;background:#bcbcbc"></div><div style="position:absolute;left:9px;top:155.5px;width:1px;height:1px;background:#bcbcbc"></div><div style="position:absolute;left:9px;top:158.5px;width:1px;height:1px;background:#bcbcbc"></div><div style="position:absolute;left:9px;top:161.5px;width:1px;height:1px;background:#bcbcbc"></div><div style="position:absolute;left:9px;top:164.5px;width:1px;height:1px;background:#bcbcbc"></div>
<svg style="left:19.00px;top:146.00px;" width="24" height="24" viewBox="0 0 24 24"><g transform="rotate(-45 12 12)"><path d="M5 3h5v9a2 2 0 0 0 4 0V3h5v9a7 7 0 0 1-14 0z" fill="#d01818" stroke="#9a0000" stroke-width="0.6"/><rect x="5.6" y="3.6" width="3.8" height="3" fill="#f4f4f4"/><rect x="14.6" y="3.6" width="3.8" height="3" fill="#f4f4f4"/></g></svg>
<svg style="left:53.00px;top:146.00px;" width="24" height="24" viewBox="0 0 24 24"><circle cx="4" cy="3" r="1.6" fill="none" stroke="#d8d8d8"/><path d="M4 4l3 7 3 5v5M10 16l3-5 5 0M13 11V6h5M4 8h6" stroke="#dcdcdc" stroke-width="1.2" fill="none"/><circle cx="18" cy="6" r="1.6" fill="none" stroke="#d8d8d8"/><circle cx="18" cy="11" r="1.6" fill="none" stroke="#d8d8d8"/><circle cx="10" cy="21" r="1.8" fill="none" stroke="#d8d8d8"/></svg>
<svg style="left:68.00px;top:160.50px;color:#999;" width="11" height="11" viewBox="0 0 24 24"><path d="M2 8h20l-10 10z" fill="currentColor"/></svg>
<svg style="left:85.00px;top:146.00px;" width="24" height="24" viewBox="0 0 24 24"><rect x="3" y="3" width="3" height="3" fill="none" stroke="#d0d0d0" stroke-width="0.9"/><rect x="15" y="5" width="3" height="3" fill="none" stroke="#d0d0d0" stroke-width="0.9"/><rect x="8" y="16" width="3" height="3" fill="none" stroke="#d0d0d0" stroke-width="0.9"/></svg>
<svg style="left:101.00px;top:160.50px;color:#999;" width="11" height="11" viewBox="0 0 24 24"><path d="M2 8h20l-10 10z" fill="currentColor"/></svg>
<div style="position:absolute;left:114.5px;top:148px;width:90px;height:22px;background:#f0f0f0;border:1px solid #b4b4b4;border-radius:3px;box-sizing:border-box"></div>
<div style="position:absolute;left:187.5px;top:149px;width:1px;height:20px;background:#c8c8c8"></div>
<div class="t" style="left:119.5px;top:151px;font-size:14px;line-height:16px;color:#6d6d7a">12</div>
<svg style="left:190px;top:150px" width="12" height="18" viewBox="0 0 12 18"><path d="M2 7l4-4 4 4z M2 11l4 4 4-4z" fill="#8a8a8a"/></svg>
<div style="position:absolute;left:206.5px;top:147px;width:71px;height:23px;background:linear-gradient(#fafafa,#efefef);border:1px solid #c4c4c4;border-radius:3px;box-sizing:border-box"></div>
<div class="t" style="left:211.5px;top:150px;font-size:14.5px;line-height:16px;color:#6d6d7a">px</div>
<svg style="left:257.10px;top:152.50px;color:#999;" width="11" height="11" viewBox="0 0 24 24"><path d="M2 8h20l-10 10z" fill="currentColor"/></svg>
<svg style="left:283.00px;top:146.00px;" width="24" height="24" viewBox="0 0 24 24"><path d="M10 13L4 2M10 13l11-4M10 13v10" stroke="#5aa05a" stroke-width="1.6"/><rect x="8" y="11" width="4" height="4" fill="#999" stroke="#777" stroke-width="0.6"/></svg>
<svg style="left:316.00px;top:146.00px;" width="24" height="24" viewBox="0 0 24 24"><path d="M2 2l20 20M22 2L2 22" stroke="#dedede" stroke-width="1.8"/><rect x="10" y="10" width="4" height="4" fill="none" stroke="#e4e4e4"/></svg>
<svg style="left:349.00px;top:146.00px;" width="24" height="24" viewBox="0 0 24 24"><path d="M2 22L22 2" stroke="#dedede" stroke-width="1.8"/><path d="M5 4l5 7 9-3-4 12-5-9z" fill="#d8d4c8" opacity="0.8"/></svg>
<svg style="left:378.50px;top:152.50px;color:#999;" width="11" height="11" viewBox="0 0 24 24"><path d="M2 8h20l-10 10z" fill="currentColor"/></svg>
<div style="position:absolute;left:403px;top:149.5px;width:1px;height:1px;background:#bcbcbc"></div><div style="position:absolute;left:403px;top:152.5px;width:1px;height:1px;background:#bcbcbc"></div><div style="position:absolute;left:403px;top:155.5px;width:1px;height:1px;background:#bcbcbc"></div><div style="position:absolute;left:403px;top:158.5px;width:1px;height:1px;background:#bcbcbc"></div><div style="position:absolute;left:403px;top:161.5px;width:1px;height:1px;background:#bcbcbc"></div><div style="position:absolute;left:403px;top:164.5px;width:1px;height:1px;background:#bcbcbc"></div><div style="position:absolute;left:406px;top:149.5px;width:1px;height:1px;background:#bcbcbc"></div><div style="position:absolute;left:406px;top:152.5px;width:1px;height:1px;background:#bcbcbc"></div><div style="position:absolute;left:406px;top:155.5px;width:1px;height:1px;background:#bcbcbc"></div><div style="position:absolute;left:406px;top:158.5px;width:1px;height:1px;background:#bcbcbc"></div><div style="position:absolute;left:406px;top:161.5px;width:1px;height:1px;background:#bcbcbc"></div><div style="position:absolute;left:406px;top:164.5px;width:1px;height:1px;background:#bcbcbc"></div>
<svg style="left:416.00px;top:146.00px;" width="24" height="24" viewBox="0 0 24 24"><rect x="1" y="1" width="13" height="8" fill="#fff" stroke="#888" stroke-width="0.8"/><circle cx="15" cy="10" r="1" fill="#3060c0"/><path d="M14 10l-0.5 1" stroke="#d03030" stroke-width="1.2"/><path d="M13 20c-1-3 0-5 2-6 3-1 5 1 6 3l1 4-2 2c-3 0-6-1-7-3z" fill="#fff" stroke="#555" stroke-width="0.8"/></svg>
<div style="position:absolute;left:453.6px;top:149.5px;width:1px;height:1px;background:#bcbcbc"></div><div style="position:absolute;left:453.6px;top:152.5px;width:1px;height:1px;background:#bcbcbc"></div><div style="position:absolute;left:453.6px;top:155.5px;width:1px;height:1px;background:#bcbcbc"></div><div style="position:absolute;left:453.6px;top:158.5px;width:1px;height:1px;background:#bcbcbc"></div><div style="position:absolute;left:453.6px;top:161.5px;width:1px;height:1px;background:#bcbcbc"></div><div style="position:absolute;left:453.6px;top:164.5px;width:1px;height:1px;background:#bcbcbc"></div><div style="position:absolute;left:456.6px;top:149.5px;width:1px;height:1px;background:#bcbcbc"></div><div style="position:absolute;left:456.6px;top:152.5px;width:1px;height:1px;background:#bcbcbc"></div><div style="position:absolute;left:456.6px;top:155.5px;width:1px;height:1px;background:#bcbcbc"></div><div style="position:absolute;left:456.6px;top:158.5px;width:1px;height:1px;background:#bcbcbc"></div><div style="position:absolute;left:456.6px;top:161.5px;width:1px;height:1px;background:#bcbcbc"></div><div style="position:absolute;left:456.6px;top:164.5px;width:1px;height:1px;background:#bcbcbc"></div>
<svg style="left:467.00px;top:146.00px;" width="24" height="24" viewBox="0 0 24 24"><rect x="0.5" y="0.5" width="23" height="23" fill="none" stroke="#e0d6cc" stroke-width="0.8"/><circle cx="5" cy="5" r="3.3" fill="#7f80e8"/><ellipse cx="10.5" cy="11.5" rx="6.5" ry="3.5" transform="rotate(-35 10.5 11.5)" fill="#f03838"/><circle cx="18.5" cy="18.5" r="3.8" fill="#3ea04a"/><g fill="#111"><rect x="1" y="4" width="1.5" height="1.5"/><rect x="6" y="14" width="1.5" height="1.5"/><rect x="15" y="7" width="1.5" height="1.5"/><rect x="21" y="20" width="1.5" height="1.5"/><rect x="18" y="22" width="1.5" height="1.5"/><rect x="14" y="17" width="1.5" height="1.5"/></g></svg>
<svg style="left:500.00px;top:146.00px;" width="24" height="24" viewBox="0 0 24 24"><rect x="0.5" y="0.5" width="23" height="23" fill="none" stroke="#e0d6cc" stroke-width="0.8"/><rect x="8" y="2" width="8" height="20" fill="#4fa652"/><rect x="7" y="1" width="2" height="2" fill="#111"/><rect x="7" y="21" width="2" height="2" fill="#111"/></svg>
<div style="position:absolute;left:532px;top:142px;width:1px;height:34px;background:#d0d0d0"></div>
<div style="position:absolute;left:546px;top:149.5px;width:1px;height:1px;background:#bcbcbc"></div><div style="position:absolute;left:546px;top:152.5px;width:1px;height:1px;background:#bcbcbc"></div><div style="position:absolute;left:546px;top:155.5px;width:1px;height:1px;background:#bcbcbc"></div><div style="position:absolute;left:546px;top:158.5px;width:1px;height:1px;background:#bcbcbc"></div><div style="position:absolute;left:546px;top:161.5px;width:1px;height:1px;background:#bcbcbc"></div><div style="position:absolute;left:546px;top:164.5px;width:1px;height:1px;background:#bcbcbc"></div><div style="position:absolute;left:549px;top:149.5px;width:1px;height:1px;background:#bcbcbc"></div><div style="position:absolute;left:549px;top:152.5px;width:1px;height:1px;background:#bcbcbc"></div><div style="position:absolute;left:549px;top:155.5px;width:1px;height:1px;background:#bcbcbc"></div><div style="position:absolute;left:549px;top:158.5px;width:1px;height:1px;background:#bcbcbc"></div><div style="position:absolute;left:549px;top:161.5px;width:1px;height:1px;background:#bcbcbc"></div><div style="position:absolute;left:549px;top:164.5px;width:1px;height:1px;background:#bcbcbc"></div>
<svg style="left:560.00px;top:146.00px;" width="24" height="24" viewBox="0 0 24 24"><path d="M3 21c0-8 5-15 15-18" fill="none" stroke="#dcdcdc" stroke-width="1.3"/><rect x="1" y="19" width="3.5" height="3.5" fill="none" stroke="#d8d8d8" stroke-width="0.9"/><rect x="4.5" y="6" width="3.5" height="3.5" fill="none" stroke="#d8d8d8" stroke-width="0.9"/><rect x="16" y="1" width="3.5" height="3.5" fill="none" stroke="#d8d8d8" stroke-width="0.9"/><rect x="12" y="12" width="10" height="10" rx="1.8" fill="#cfccc4"/><path d="M17 14v6M14 17h6M14.9 14.9l4.2 4.2M14.9 19.1l4.2 -4.2" stroke="#fff" stroke-width="0.9" fill="none"/></svg>
<svg style="left:589.10px;top:152.50px;color:#999;" width="11" height="11" viewBox="0 0 24 24"><path d="M2 8h20l-10 10z" fill="currentColor"/></svg>
<svg style="left:607.50px;top:146.00px;" width="24" height="24" viewBox="0 0 24 24"><circle cx="10" cy="10" r="8" fill="none" stroke="#dedede" stroke-width="2.2"/><rect x="12" y="12" width="10" height="10" rx="1.8" fill="#cfccc4"/><path d="M17 14v6M14 17h6M14.9 14.9l4.2 4.2M14.9 19.1l4.2 -4.2" stroke="#fff" stroke-width="0.9" fill="none"/></svg>
<svg style="left:637.00px;top:152.50px;color:#999;" width="11" height="11" viewBox="0 0 24 24"><path d="M2 8h20l-10 10z" fill="currentColor"/></svg>
<svg style="left:655.00px;top:146.00px;" width="24" height="24" viewBox="0 0 24 24"><ellipse cx="10" cy="9" rx="9" ry="6" transform="rotate(-15 10 9)" fill="none" stroke="#dedede" stroke-width="1.8"/><circle cx="10" cy="7" r="2" fill="none" stroke="#ddd"/><rect x="12" y="12" width="10" height="10" rx="1.8" fill="#cfccc4"/><path d="M17 14v6M14 17h6M14.9 14.9l4.2 4.2M14.9 19.1l4.2 -4.2" stroke="#fff" stroke-width="0.9" fill="none"/></svg>
<svg style="left:685.10px;top:152.50px;color:#999;" width="11" height="11" viewBox="0 0 24 24"><path d="M2 8h20l-10 10z" fill="currentColor"/></svg>
<svg style="left:703.00px;top:146.00px;" width="24" height="24" viewBox="0 0 24 24"><rect x="2" y="3" width="18" height="13" fill="none" stroke="#dedede" stroke-width="2"/><rect x="8" y="7" width="4" height="4" fill="none" stroke="#d8d8d8"/><rect x="11" y="12" width="10" height="10" rx="1.8" fill="#cfccc4"/><path d="M16 14v6M13 17h6M13.9 14.9l4.2 4.2M13.9 19.1l4.2 -4.2" stroke="#fff" stroke-width="0.9" fill="none"/></svg>
<svg style="left:733.10px;top:152.50px;color:#999;" width="11" height="11" viewBox="0 0 24 24"><path d="M2 8h20l-10 10z" fill="currentColor"/></svg>
<svg style="left:751.00px;top:146.00px;" width="24" height="24" viewBox="0 0 24 24"><path d="M8 2l9 2 1 12-9 3-7-8z" fill="none" stroke="#dedede" stroke-width="1.8"/><rect x="12" y="12" width="10" height="10" rx="1.8" fill="#cfccc4"/><path d="M17 14v6M14 17h6M14.9 14.9l4.2 4.2M14.9 19.1l4.2 -4.2" stroke="#fff" stroke-width="0.9" fill="none"/></svg>
<svg style="left:781.10px;top:152.50px;color:#999;" width="11" height="11" viewBox="0 0 24 24"><path d="M2 8h20l-10 10z" fill="currentColor"/></svg>
<div style="position:absolute;left:804px;top:149.5px;width:1px;height:1px;background:#bcbcbc"></div><div style="position:absolute;left:804px;top:152.5px;width:1px;height:1px;background:#bcbcbc"></div><div style="position:absolute;left:804px;top:155.5px;width:1px;height:1px;background:#bcbcbc"></div><div style="position:absolute;left:804px;top:158.5px;width:1px;height:1px;background:#bcbcbc"></div><div style="position:absolute;left:804px;top:161.5px;width:1px;height:1px;background:#bcbcbc"></div><div style="position:absolute;left:804px;top:164.5px;width:1px;height:1px;background:#bcbcbc"></div><div style="position:absolute;left:807px;top:149.5px;width:1px;height:1px;background:#bcbcbc"></div><div style="position:absolute;left:807px;top:152.5px;width:1px;height:1px;background:#bcbcbc"></div><div style="position:absolute;left:807px;top:155.5px;width:1px;height:1px;background:#bcbcbc"></div><div style="position:absolute;left:807px;top:158.5px;width:1px;height:1px;background:#bcbcbc"></div><div style="position:absolute;left:807px;top:161.5px;width:1px;height:1px;background:#bcbcbc"></div><div style="position:absolute;left:807px;top:164.5px;width:1px;height:1px;background:#bcbcbc"></div>
<svg style="left:817.00px;top:146.00px;" width="24" height="24" viewBox="0 0 24 24"><ellipse cx="12" cy="19" rx="10" ry="4" fill="#a8b8c8"/><rect x="2" y="5" width="20" height="14" fill="#b8c8d8"/><ellipse cx="12" cy="14" rx="10" ry="4" fill="#c4d2e0" stroke="#8da0b4" stroke-width="0.6"/><ellipse cx="12" cy="9.5" rx="10" ry="4" fill="#c8d6e4" stroke="#8da0b4" stroke-width="0.6"/><ellipse cx="12" cy="5" rx="10" ry="4" fill="#dde8f0" stroke="#8da0b4" stroke-width="0.6"/></svg>
<svg style="left:847.10px;top:152.50px;color:#444;" width="11" height="11" viewBox="0 0 24 24"><path d="M2 8h20l-10 10z" fill="currentColor"/></svg>
<svg style="left:866.00px;top:146.50px;" width="23" height="23" viewBox="0 0 24 24"><rect x="0" y="0" width="24" height="24" fill="#f2d040"/><text x="3" y="15" font-size="7" font-weight="700" font-family="Liberation Sans" fill="#3a9a3a">EDGV</text></svg>
<svg style="left:895.50px;top:152.50px;color:#444;" width="11" height="11" viewBox="0 0 24 24"><path d="M2 8h20l-10 10z" fill="currentColor"/></svg>
<svg style="left:913.00px;top:146.00px;" width="24" height="24" viewBox="0 0 24 24"><ellipse cx="12" cy="19" rx="10" ry="4" fill="#9a9a9a"/><rect x="2" y="5" width="20" height="14" fill="#bcbcbc"/><ellipse cx="12" cy="5" rx="10" ry="4" fill="#e8e8e8" stroke="#999" stroke-width="0.6"/><path d="M3 15l6 6M9 15l-6 6" stroke="#e01010" stroke-width="2.2"/><path d="M13 18l3 3 6-6" stroke="#30b030" stroke-width="2.4" fill="none"/></svg>
<div style="position:absolute;left:0px;top:186px;width:440px;height:862px;background:#f0f0f0"></div>
<div class="t" style="left:4.4px;top:189.98px;font-size:14.2px;line-height:14.2px;color:#000;font-weight:400;">Camadas</div>
<svg style="left:404.50px;top:189.50px;" width="12" height="12" viewBox="0 0 24 24"><g transform="scale(2)"><rect x="0.5" y="0.5" width="11" height="11" rx="2.5" fill="none" stroke="#777" stroke-width="1"/><rect x="4.5" y="2.5" width="5" height="5" rx="1" fill="none" stroke="#777" stroke-width="1.2"/><rect x="2.5" y="4.5" width="5" height="5" rx="1" fill="#f0f0f0" stroke="#777" stroke-width="1.2"/></g></svg>
<svg style="left:418.50px;top:189.50px;" width="12" height="12" viewBox="0 0 24 24"><g transform="scale(2)"><rect x="0.5" y="0.5" width="11" height="11" rx="2.5" fill="none" stroke="#777" stroke-width="1"/><path d="M3 3l6 6M9 3l-6 6" stroke="#666" stroke-width="2"/></g></svg>
<svg style="left:7.50px;top:211.50px;" width="17" height="17" viewBox="0 0 24 24"><path d="M3 14l9-3 3 7-9 3z" fill="#f2d04a"/><path d="M3 14l3 7-3-1z" fill="#e04040"/><path d="M3 14l3-1 1 3-3 1z" fill="#5b8ac4"/><path d="M12 12l9-8" stroke="#d9a040" stroke-width="2.2"/></svg>
<svg style="left:32.50px;top:211.50px;" width="17" height="17" viewBox="0 0 24 24"><path d="M6 6h9v12H6z" fill="none" stroke="#777" stroke-width="1"/><path d="M3 9h9v13H3z" fill="none" stroke="#999" stroke-width="1"/><path d="M10 2v14" stroke="#5b8ac4" stroke-width="1.6"/><rect x="13" y="16" width="7" height="7" fill="#4a9a4a"/><circle cx="16.5" cy="19.5" r="2" fill="#fff"/></svg>
<svg style="left:58.00px;top:211.00px;" width="18" height="18" viewBox="0 0 24 24"><path d="M1 11c6-7 14-7 20 0-6 7-14 7-20 0z" fill="#fff" stroke="#666" stroke-width="0.9"/><circle cx="10" cy="11" r="4" fill="#5b8ac4"/><circle cx="10" cy="10" r="1.4" fill="#111"/><path d="M13 16h10l-5 5z" fill="#444"/></svg>
<svg style="left:82.50px;top:211.50px;" width="17" height="17" viewBox="0 0 24 24"><path d="M2 3h18l-7 9v10l-4-3v-7z" fill="#6d9bd4" stroke="#4a76ae" stroke-width="0.6"/><rect x="2" y="3" width="18" height="2" fill="#f2d04a"/></svg>
<svg style="left:108.50px;top:211.50px;" width="17" height="17" viewBox="0 0 24 24"><text x="2" y="14" font-size="16" font-family="Liberation Serif" fill="#d4d4d4">&#949;</text><rect x="11" y="12" width="8" height="10" fill="#ececec"/></svg>
<svg style="left:147.50px;top:211.50px;" width="17" height="17" viewBox="0 0 24 24"><rect x="2" y="4" width="9" height="17" fill="none" stroke="#bbb" stroke-width="0.8" stroke-dasharray="1.2 1"/><path d="M15 2v14M10 12l5 6 5-6" stroke="#4a7bc0" stroke-width="2.4" fill="none"/><rect x="3" y="6" width="3" height="3" fill="#f2a030"/><rect x="3" y="14" width="3" height="3" fill="#f2a030"/></svg>
<svg style="left:172.50px;top:211.50px;" width="17" height="17" viewBox="0 0 24 24"><rect x="2" y="4" width="9" height="17" fill="none" stroke="#bbb" stroke-width="0.8" stroke-dasharray="1.2 1"/><path d="M15 22V8M10 12l5-6 5 6" stroke="#4a7bc0" stroke-width="2.4" fill="none"/><rect x="3" y="6" width="3" height="3" fill="#f2a030"/><rect x="3" y="14" width="3" height="3" fill="#f2a030"/></svg>
<svg style="left:197.50px;top:211.50px;" width="17" height="17" viewBox="0 0 24 24"><rect x="2" y="2" width="16" height="16" fill="none" stroke="#777" stroke-width="1"/><rect x="13" y="15" width="9" height="6" rx="1" fill="#e02828"/><path d="M15 18h5" stroke="#fff" stroke-width="1.4"/></svg>
<svg style="left:130.00px;top:215.00px;color:#999;" width="10" height="10" viewBox="0 0 24 24"><path d="M2 8h20l-10 10z" fill="currentColor"/></svg>
<div style="position:absolute;left:0px;top:236px;width:432px;height:812px;background:#fff;border:1px solid #a8a8a8;box-sizing:border-box"></div>
<svg style="left:6.00px;top:241.00px;" width="14" height="14" viewBox="0 0 24 24"><path d="M8 5l8 7-8 7z" fill="#555"/></svg>
<div class="cb" style="left:29px;top:240px;width:16px;height:16px"></div>
<svg style="left:30.00px;top:241.00px;" width="14" height="14" viewBox="0 0 24 24"><path d="M4.8 11.6L10.6 20.2L18.8 4.2" fill="none" stroke="#000" stroke-width="3.3" stroke-linejoin="round" stroke-linecap="round"/></svg>
<svg style="left:54.00px;top:239.50px;" width="17" height="17" viewBox="0 0 24 24"><g fill="#2d4a6a"><rect x="0" y="0" width="8" height="8"/><rect x="16" y="0" width="8" height="8"/><rect x="8" y="8" width="8" height="8"/><rect x="0" y="16" width="8" height="8"/></g><g fill="#a8c4e4"><rect x="8" y="0" width="8" height="8"/><rect x="0" y="8" width="8" height="8"/><rect x="16" y="8" width="8" height="8"/><rect x="8" y="16" width="8" height="8"/></g></svg>
<div class="t" style="left:78px;top:241.23px;font-size:14.5px;line-height:14.5px;color:#000;font-weight:700;">CBERS_4A_WPM_20200707_195_122_L4_BAND0</div>
<svg style="left:6.00px;top:263.00px;" width="14" height="14" viewBox="0 0 24 24"><path d="M8 5l8 7-8 7z" fill="#555"/></svg>
<div class="cb" style="left:29px;top:262px;width:16px;height:16px"></div>
<svg style="left:30.00px;top:263.00px;" width="14" height="14" viewBox="0 0 24 24"><path d="M4.8 11.6L10.6 20.2L18.8 4.2" fill="none" stroke="#000" stroke-width="3.3" stroke-linejoin="round" stroke-linecap="round"/></svg>
<svg style="left:54.00px;top:261.50px;" width="17" height="17" viewBox="0 0 24 24"><g fill="#2d4a6a"><rect x="0" y="0" width="8" height="8"/><rect x="16" y="0" width="8" height="8"/><rect x="8" y="8" width="8" height="8"/><rect x="0" y="16" width="8" height="8"/></g><g fill="#a8c4e4"><rect x="8" y="0" width="8" height="8"/><rect x="0" y="8" width="8" height="8"/><rect x="16" y="8" width="8" height="8"/><rect x="8" y="16" width="8" height="8"/></g></svg>
<div class="t" style="left:78px;top:263.23px;font-size:14.5px;line-height:14.5px;color:#000;font-weight:700;">CBERS_4A_WPM_20200707_195_122_L4_BAND1</div>
<svg style="left:6.00px;top:285.00px;" width="14" height="14" viewBox="0 0 24 24"><path d="M8 5l8 7-8 7z" fill="#555"/></svg>
<div class="cb" style="left:29px;top:284px;width:16px;height:16px"></div>
<svg style="left:30.00px;top:285.00px;" width="14" height="14" viewBox="0 0 24 24"><path d="M4.8 11.6L10.6 20.2L18.8 4.2" fill="none" stroke="#000" stroke-width="3.3" stroke-linejoin="round" stroke-linecap="round"/></svg>
<svg style="left:54.00px;top:283.50px;" width="17" height="17" viewBox="0 0 24 24"><g fill="#2d4a6a"><rect x="0" y="0" width="8" height="8"/><rect x="16" y="0" width="8" height="8"/><rect x="8" y="8" width="8" height="8"/><rect x="0" y="16" width="8" height="8"/></g><g fill="#a8c4e4"><rect x="8" y="0" width="8" height="8"/><rect x="0" y="8" width="8" height="8"/><rect x="16" y="8" width="8" height="8"/><rect x="8" y="16" width="8" height="8"/></g></svg>
<div class="t" style="left:78px;top:285.23px;font-size:14.5px;line-height:14.5px;color:#000;font-weight:700;">CBERS_4A_WPM_20200707_195_122_L4_BAND2</div>
<svg style="left:6.00px;top:307.00px;" width="14" height="14" viewBox="0 0 24 24"><path d="M8 5l8 7-8 7z" fill="#555"/></svg>
<div class="cb" style="left:29px;top:306px;width:16px;height:16px"></div>
<svg style="left:30.00px;top:307.00px;" width="14" height="14" viewBox="0 0 24 24"><path d="M4.8 11.6L10.6 20.2L18.8 4.2" fill="none" stroke="#000" stroke-width="3.3" stroke-linejoin="round" stroke-linecap="round"/></svg>
<svg style="left:54.00px;top:305.50px;" width="17" height="17" viewBox="0 0 24 24"><g fill="#2d4a6a"><rect x="0" y="0" width="8" height="8"/><rect x="16" y="0" width="8" height="8"/><rect x="8" y="8" width="8" height="8"/><rect x="0" y="16" width="8" height="8"/></g><g fill="#a8c4e4"><rect x="8" y="0" width="8" height="8"/><rect x="0" y="8" width="8" height="8"/><rect x="16" y="8" width="8" height="8"/><rect x="8" y="16" width="8" height="8"/></g></svg>
<div class="t" style="left:78px;top:307.23px;font-size:14.5px;line-height:14.5px;color:#000;font-weight:700;">CBERS_4A_WPM_20200707_195_122_L4_BAND3</div>
<svg style="left:6.00px;top:329.00px;" width="14" height="14" viewBox="0 0 24 24"><path d="M8 5l8 7-8 7z" fill="#555"/></svg>
<div class="cb" style="left:29px;top:328px;width:16px;height:16px"></div>
<svg style="left:30.00px;top:329.00px;" width="14" height="14" viewBox="0 0 24 24"><path d="M4.8 11.6L10.6 20.2L18.8 4.2" fill="none" stroke="#000" stroke-width="3.3" stroke-linejoin="round" stroke-linecap="round"/></svg>
<svg style="left:54.00px;top:327.50px;" width="17" height="17" viewBox="0 0 24 24"><g fill="#2d4a6a"><rect x="0" y="0" width="8" height="8"/><rect x="16" y="0" width="8" height="8"/><rect x="8" y="8" width="8" height="8"/><rect x="0" y="16" width="8" height="8"/></g><g fill="#a8c4e4"><rect x="8" y="0" width="8" height="8"/><rect x="0" y="8" width="8" height="8"/><rect x="16" y="8" width="8" height="8"/><rect x="8" y="16" width="8" height="8"/></g></svg>
<div class="t" style="left:78px;top:329.23px;font-size:14.5px;line-height:14.5px;color:#000;font-weight:700;text-decoration:underline;text-decoration-thickness:1px;text-underline-offset:2px;">CBERS_4A_WPM_20200707_195_122_L4_BAND4</div>
<svg style="left:440px;top:187px" width="497" height="860" viewBox="440 187 497 860">
<defs>
<filter id="nz" x="440" y="187" width="497" height="860" filterUnits="userSpaceOnUse" color-interpolation-filters="sRGB">
<feTurbulence type="fractalNoise" baseFrequency="0.42" numOctaves="2" seed="3" result="n1"/>
<feColorMatrix in="n1" type="matrix" values="0.28 0 0 0 0.028  0.28 0 0 0 0.028  0.28 0 0 0 0.028  0 0 0 0 1" result="g1"/>
<feTurbulence type="fractalNoise" baseFrequency="0.015" numOctaves="3" seed="7" result="n2"/>
<feColorMatrix in="n2" type="matrix" values="0 0 0 0 1  0 0 0 0 1  0 0 0 0 1  0.14 0 0 0 -0.06" result="g2"/>
<feComposite in="g2" in2="g1" operator="over" result="b1"/>
<feTurbulence type="fractalNoise" baseFrequency="0.45" numOctaves="1" seed="11" result="n3"/>
<feColorMatrix in="n3" type="matrix" values="0 0 0 0 0.62  0 0 0 0 0.62  0 0 0 0 0.62  6 0 0 0 -4.1" result="g3"/>
<feComposite in="g3" in2="b1" operator="over"/>
</filter>
<filter id="br" x="440" y="187" width="497" height="860" filterUnits="userSpaceOnUse" color-interpolation-filters="sRGB">
<feTurbulence type="fractalNoise" baseFrequency="0.55" numOctaves="1" seed="5" result="n"/>
<feColorMatrix in="n" type="matrix" values="0 0 0 0 0.75  0 0 0 0 0.75  0 0 0 0 0.75  4 0 0 0 -1.9" result="s"/>
<feComposite in="s" in2="SourceAlpha" operator="in"/>
</filter>
<filter id="rough" x="440" y="187" width="497" height="860" filterUnits="userSpaceOnUse" color-interpolation-filters="sRGB">
<feTurbulence type="fractalNoise" baseFrequency="0.25" numOctaves="2" seed="9" result="t"/>
<feDisplacementMap in="SourceGraphic" in2="t" scale="4" xChannelSelector="R" yChannelSelector="G"/>
</filter>
</defs>
<rect x="440" y="187" width="497" height="860" fill="#3a3a3a" filter="url(#nz)"/>
<g fill="none" stroke="#8a8a8a" stroke-width="1" opacity="0.3"><path d="M837 346 L853 320 L871 288"/><path d="M700 295 L871 296"/><path d="M717 273 L698 299 L690 330 L683 380"/><path d="M717 273 L760 293"/><path d="M488 647 L789 645"/><path d="M440 560 L600 557"/><path d="M600 470 L650 462 L760 460 L870 458"/><path d="M620 470 L600 540 L595 640"/><path d="M700 460 L690 600 L688 700 L700 800 L690 900"/><path d="M760 790 L790 780 L850 770"/><path d="M870 520 L900 480 L935 440"/><path d="M852 945 L900 900 L935 880"/><path d="M540 880 L700 879"/><path d="M660 760 L660 1040"/><path d="M458 300 L540 300 L600 300"/><path d="M620 640 L640 760 L680 830"/><path d="M480 700 L470 800 L500 900 L560 980"/><path d="M900 220 L935 190"/></g>
<g fill="#fff" filter="url(#br)"><path d="M488 644 L600 643 L700 642 L789 642 L789 647 L700 648 L600 649 L488 650 Z" opacity="0.68"/><path d="M821 346 L834 347 L833 421 L820 421 Z" opacity="0.60"/><path d="M808 676 L852 672 L880 678 L880 714 L850 712 L808 714 Z" opacity="0.24"/><path d="M890 610 L915 598 L937 598 L937 656 L900 650 L883 655 Z" opacity="0.20"/><path d="M652 851 L690 870 L688 876 L650 857 Z" opacity="0.60"/><path d="M440 200 L520 200 L520 640 L440 640 Z" opacity="0.10"/></g>
<g fill="#d8d8d8" opacity="0.75">
<rect x="822" y="378" width="8" height="6"/><rect x="824" y="388" width="6" height="9"/><rect x="821" y="410" width="10" height="6"/><rect x="826" y="352" width="5" height="6"/><rect x="829" y="400" width="4" height="5"/>
</g>
<g fill="none" stroke="#9a9a9a" stroke-width="1" opacity="0.35" stroke-dasharray="3 2">
<path d="M540 800 L700 798"/><path d="M560 760 L560 900"/><path d="M600 840 L720 838"/><path d="M620 780 L620 880"/><path d="M520 850 L600 852"/>
<path d="M700 700 L800 700"/><path d="M750 660 L752 760"/><path d="M640 560 L760 560"/><path d="M460 330 L600 330"/><path d="M520 260 L520 400"/>
</g>
<g fill="#090909" filter="url(#rough)"><path d="M480 195 L488 192 L496 197 L501 206 L494 209 L484 207 Z"/><path d="M663 206 L672 205 L681 203 L676 212 L670 215 L666 221 L663 216 Z"/><path d="M620 205 L628 204 L634 210 L630 214 L622 213 Z"/><path d="M772 187 L790 187 L788 195 L780 194 L776 199 L773 193 Z"/><path d="M794 191 L806 190 L807 198 L800 204 L795 198 Z"/><path d="M704 254 L710 251 L713 258 L706 260 Z"/><path d="M529 240 L535 238 L536 247 L530 248 Z"/><path d="M587 279 L599 278 L601 290 L596 294 L592 286 L587 285 Z"/><path d="M609 282 L627 282 L626 287 L611 288 Z"/><path d="M603 322 L612 321 L620 328 L625 336 L617 338 L610 331 L604 330 Z"/><path d="M506 354 L520 352 L527 361 L540 371 L534 381 L526 385 L520 395 L514 391 L517 380 L509 376 L505 366 Z"/><path d="M789 350 L805 347 L816 344 L822 335 L829 345 L825 352 L819 360 L815 370 L810 383 L811 368 L814 355 L805 352 L790 355 Z"/><path d="M756 346 L770 344 L781 342 L781 354 L768 352 L757 350 Z"/><path d="M489 439 L500 436 L506 443 L503 452 L500 459 L490 458 L491 448 Z"/><path d="M920 360 L930 355 L935 358 L935 368 L925 369 L920 365 Z"/><path d="M910 416 L918 413 L919 424 L911 423 Z"/><path d="M754 313 L762 314 L768 316 L760 318 Z"/><path d="M558 257 L564 256 L564 262 L559 262 Z"/><path d="M496 273 L502 272 L502 282 L497 282 Z"/><path d="M531 239 L536 240 L534 246 Z"/><path d="M539 497 L552 496 L569 500 L560 505 L548 507 L540 510 Z"/><path d="M590 558 L596 562 L601 570 L610 572 L612 584 L604 589 L597 588 L595 596 L590 593 L592 582 L588 572 Z"/><path d="M624 558 L632 559 L636 566 L627 566 Z"/><path d="M756 568 L765 571 L773 578 L781 571 L788 569 L779 581 L775 592 L770 593 L768 583 L760 575 Z"/><path d="M812 598 L818 597 L824 607 L820 612 L813 611 Z"/><path d="M520 670 L535 667 L547 666 L547 676 L532 676 L520 673 Z"/><path d="M557 668 L566 666 L577 667 L570 677 L562 679 L557 674 Z"/><path d="M718 690 L728 686 L731 693 L727 701 L719 697 Z"/><path d="M632 700 L640 698 L644 705 L638 709 L633 707 Z"/><path d="M562 723 L570 722 L581 728 L572 731 L563 729 Z"/><path d="M598 744 L612 740 L625 741 L620 748 L605 750 Z"/><path d="M440 723 L450 725 L455 735 L453 748 L448 757 L440 757 Z"/><path d="M821 693 L853 692 L853 733 L842 730 L835 741 L822 738 L805 740 L792 741 L778 739 L776 730 L786 727 L798 718 L812 712 L821 705 Z"/><path d="M862 640 L873 634 L875 641 L868 646 L861 645 Z"/><path d="M801 636 L814 633 L814 639 L802 639 Z"/><path d="M811 661 L818 660 L819 668 L811 667 Z"/><path d="M872 467 L883 467 L881 476 L877 483 L873 478 Z"/><path d="M484 467 L496 467 L494 480 L491 491 L486 484 Z"/><path d="M532 624 L544 623 L545 629 L535 630 Z"/><path d="M550 634 L558 637 L567 638 L566 642 L553 640 Z"/><path d="M843 653 L853 652 L853 658 L845 658 Z"/><path d="M812 818 L826 820 L838 814 L845 808 L848 820 L847 831 L836 838 L820 840 L806 841 L796 845 L786 843 L784 838 L797 836 L806 832 Z"/><path d="M723 940 L735 937 L750 936 L765 930 L774 924 L782 928 L785 945 L779 955 L770 960 L760 963 L752 964 L745 957 L734 955 L722 948 Z"/><path d="M591 887 L600 889 L608 892 L612 899 L603 901 L595 896 Z"/><path d="M645 880 L651 876 L656 888 L652 894 L645 893 Z"/><path d="M497 859 L505 858 L511 864 L505 871 L497 868 Z"/><path d="M508 764 L518 762 L519 772 L510 774 Z"/><path d="M669 775 L678 771 L683 773 L680 780 L671 781 Z"/><path d="M658 796 L665 793 L666 802 L659 802 Z"/><path d="M703 828 L712 828 L717 835 L710 838 L704 835 Z"/><path d="M618 987 L626 985 L631 993 L624 997 L618 994 Z"/><path d="M440 1005 L452 1007 L460 1012 L463 1022 L456 1030 L449 1033 L440 1030 Z"/><path d="M551 908 L558 906 L559 912 L553 915 Z"/><path d="M888 760 L895 757 L898 764 L890 766 Z"/><path d="M576 1007 L583 1005 L585 1015 L578 1017 Z"/><path d="M585 951 L590 950 L590 958 L585 957 Z"/></g>
<path d="M934 889 L921 913 L897 929 L887 945 L886 985 L897 999 L934 1004" fill="none" stroke="#1a1a1a" stroke-width="1.6" opacity="0.6"/>
</svg>
<div style="position:absolute;left:0px;top:1048px;width:1920px;height:30px;background:#f0f0f0"></div>
<div style="position:absolute;left:0px;top:1078px;width:1920px;height:2px;background:#000"></div>
<div style="position:absolute;left:4.5px;top:1052px;width:312px;height:24px;background:#fff;border:1px solid #b4b4b4;border-radius:3px;box-sizing:border-box"></div>
<svg style="left:12.00px;top:1057.00px;" width="14" height="14" viewBox="0 0 24 24"><circle cx="9.5" cy="9.5" r="6.5" fill="none" stroke="#777" stroke-width="1.8"/><path d="M14 14l7 7" stroke="#777" stroke-width="2.2"/></svg>
<div class="t" style="left:33.7px;top:1058.75px;font-size:12.7px;line-height:12.7px;color:#707070;font-weight:400;">Escreva para localizar (Ctrl+K)</div>
<div class="t" style="left:325px;top:1059.08px;font-size:12.9px;line-height:12.9px;color:#000;font-weight:400;">5 entradas da legenda removidas.</div>
<div class="t" style="left:1011px;top:1059.50px;font-size:12.4px;line-height:12.4px;color:#000;font-weight:400;">Coordenada</div>
<div style="position:absolute;left:1083px;top:1055px;width:104px;height:21px;background:#fff;border:1px solid #c4c4c4;border-radius:2px;box-sizing:border-box"></div>
<div class="t" style="left:1087.5px;top:1059.42px;font-size:12.5px;line-height:12.5px;color:#000;font-weight:400;">688680,9228379</div>
<svg style="left:1191.00px;top:1054.00px;" width="20" height="20" viewBox="0 0 24 24"><ellipse cx="10.5" cy="12.5" rx="7" ry="9" fill="#e8e8e8" stroke="#111" stroke-width="2.8"/><path d="M10.5 4v7.5M3.5 11h14" stroke="#111" stroke-width="2"/><circle cx="15" cy="17" r="3.4" fill="#ccc" stroke="#111" stroke-width="1.6"/><path d="M17 3l2-1.5M20 6l2.5-1M21 9h2" stroke="#111" stroke-width="1.3"/></svg>
<div class="t" style="left:1225px;top:1059.50px;font-size:12.4px;line-height:12.4px;color:#000;font-weight:400;">Escala</div>
<div style="position:absolute;left:1264.5px;top:1055px;width:92px;height:21px;background:#fff;border:1px solid #c4c4c4;border-radius:2px;box-sizing:border-box"></div>
<div style="position:absolute;left:1332px;top:1056px;width:23px;height:19px;background:#f0f0f0"></div>
<div class="t" style="left:1268px;top:1059.42px;font-size:12.5px;line-height:12.5px;color:#000;font-weight:400;">1:70000</div>
<svg style="left:1337.50px;top:1059.50px;color:#4a4a4a;" width="9" height="9" viewBox="0 0 24 24"><path d="M2 8h20l-10 10z" fill="currentColor"/></svg>
<svg style="left:1369.00px;top:1057.00px;" width="16" height="16" viewBox="0 0 24 24"><path d="M6 11V7a6 6 0 0 1 12 0v4" fill="none" stroke="#666" stroke-width="2.4"/><rect x="3" y="11" width="18" height="12" rx="1" fill="#666"/></svg>
<div class="t" style="left:1394.5px;top:1059.50px;font-size:12.4px;line-height:12.4px;color:#000;font-weight:400;">Lupa</div>
<div style="position:absolute;left:1424px;top:1055px;width:92px;height:21px;background:#fff;border:1px solid #c4c4c4;border-radius:2px;box-sizing:border-box"></div>
<div class="t" style="left:1429px;top:1059.42px;font-size:12.5px;line-height:12.5px;color:#000;font-weight:400;">100%</div>
<svg style="left:1498.50px;top:1056.50px;" width="17" height="17" viewBox="0 0 24 24"><path d="M6 9l6-6 6 6z M6 15l6 6 6-6z" fill="#666"/></svg>
<div class="t" style="left:1526px;top:1059.50px;font-size:12.4px;line-height:12.4px;color:#000;font-weight:400;">Rotação</div>
<div style="position:absolute;left:1581px;top:1055px;width:88px;height:21px;background:#fff;border:1px solid #c4c4c4;border-radius:2px;box-sizing:border-box"></div>
<div class="t" style="left:1586px;top:1059.42px;font-size:12.5px;line-height:12.5px;color:#000;font-weight:400;">0,0 °</div>
<svg style="left:1651.50px;top:1056.50px;" width="17" height="17" viewBox="0 0 24 24"><path d="M6 9l6-6 6 6z M6 15l6 6 6-6z" fill="#666"/></svg>
<div class="cb" style="left:1676px;top:1056px;width:16px;height:18px"></div>
<svg style="left:1677.00px;top:1058.00px;" width="14" height="14" viewBox="0 0 24 24"><path d="M4.8 11.6L10.6 20.2L18.8 4.2" fill="none" stroke="#000" stroke-width="3.3" stroke-linejoin="round" stroke-linecap="round"/></svg>
<div class="t" style="left:1699.5px;top:1059.33px;font-size:12.6px;line-height:12.6px;color:#000;font-weight:400;">Renderizar</div>
<svg style="left:1778.00px;top:1054.00px;" width="20" height="20" viewBox="0 0 24 24"><circle cx="12" cy="12" r="9.5" fill="none" stroke="#666" stroke-width="1.4"/><ellipse cx="12" cy="12" rx="4" ry="9.5" fill="none" stroke="#666" stroke-width="1.2"/><path d="M2.5 12h19M4 7h16M4 17h16" stroke="#666" stroke-width="1.2"/></svg>
<div class="t" style="left:1802px;top:1060.01px;font-size:11.8px;line-height:11.8px;color:#000;font-weight:400;">EPSG:31984</div>
<svg style="left:1892.00px;top:1054.00px;" width="20" height="20" viewBox="0 0 24 24"><path d="M12 2c6 0 10 4 10 8.5S18 19 12 19c-1 0-2 0-3-.3L4 22l1.5-4.5C3.5 16 2 13.5 2 10.5 2 6 6 2 12 2z" fill="#666"/><circle cx="7.5" cy="10.5" r="1.5" fill="#fff"/><circle cx="12" cy="10.5" r="1.5" fill="#fff"/><circle cx="16.5" cy="10.5" r="1.5" fill="#fff"/></svg>
<div style="position:absolute;left:936px;top:0;width:984px;height:1054px;background:#fff;border:1px solid #8e8e8e;box-sizing:border-box;box-shadow:1px 2px 3px rgba(0,0,0,0.3)"></div>
<div class="t" style="left:1160px;top:4.35px;font-size:14px;line-height:14px;color:#000;font-weight:700;transform:scaleX(1);transform-origin:0 0;">Painéis</div>
<div style="position:absolute;left:937px;top:22px;width:491px;height:28px;background:#0078d7"></div>
<div class="cb" style="left:944px;top:27px;width:18px;height:18px;border-color:#d8d0c8"></div>
<div class="t" style="left:968.8px;top:29.30px;font-size:15px;line-height:15px;color:#fff;font-weight:400;transform:scaleX(0.96);transform-origin:0 0;">Caixa de Ferramentas de processamento Painel</div>
<div class="cb" style="left:944px;top:55px;width:18px;height:18px;border-color:#c0c0c0"></div>
<svg style="left:945.00px;top:56.00px;" width="16" height="16" viewBox="0 0 24 24"><path d="M4.8 11.6L10.6 20.2L18.8 4.2" fill="none" stroke="#000" stroke-width="3.3" stroke-linejoin="round" stroke-linecap="round"/></svg>
<div class="t" style="left:968.8px;top:57.30px;font-size:15px;line-height:15px;color:#000;font-weight:400;transform:scaleX(0.96);transform-origin:0 0;">Camadas Painel</div>
<div class="cb" style="left:944px;top:83px;width:18px;height:18px;border-color:#c0c0c0"></div>
<div class="t" style="left:968.8px;top:85.30px;font-size:15px;line-height:15px;color:#000;font-weight:400;transform:scaleX(0.96);transform-origin:0 0;">Captura de Coordenadas Painel</div>
<div class="cb" style="left:944px;top:111px;width:18px;height:18px;border-color:#c0c0c0"></div>
<div class="t" style="left:968.8px;top:113.30px;font-size:15px;line-height:15px;color:#000;font-weight:400;transform:scaleX(0.96);transform-origin:0 0;">DataPlotly Painel</div>
<div class="cb" style="left:944px;top:139px;width:18px;height:18px;border-color:#c0c0c0"></div>
<div class="t" style="left:968.8px;top:141.30px;font-size:15px;line-height:15px;color:#000;font-weight:400;transform:scaleX(0.96);transform-origin:0 0;">Desfazer/Refazer Painel</div>
<div class="cb" style="left:944px;top:167px;width:18px;height:18px;border-color:#c0c0c0"></div>
<div class="t" style="left:968.8px;top:169.30px;font-size:15px;line-height:15px;color:#000;font-weight:400;transform:scaleX(0.96);transform-origin:0 0;">Digitalização Avançada Painel</div>
<div class="cb" style="left:944px;top:195px;width:18px;height:18px;border-color:#c0c0c0"></div>
<div class="t" style="left:968.8px;top:197.30px;font-size:15px;line-height:15px;color:#000;font-weight:400;transform:scaleX(0.96);transform-origin:0 0;">Escala da quadrícula Painel</div>
<div class="cb" style="left:944px;top:223px;width:18px;height:18px;border-color:#c0c0c0"></div>
<div class="t" style="left:968.8px;top:225.30px;font-size:15px;line-height:15px;color:#000;font-weight:400;transform:scaleX(0.96);transform-origin:0 0;">Estatísticas Painel</div>
<div class="cb" style="left:944px;top:251px;width:18px;height:18px;border-color:#c0c0c0"></div>
<div class="t" style="left:968.8px;top:253.30px;font-size:15px;line-height:15px;color:#000;font-weight:400;transform:scaleX(0.96);transform-origin:0 0;">Estilização de camadas Painel</div>
<div class="cb" style="left:944px;top:279px;width:18px;height:18px;border-color:#c0c0c0"></div>
<div class="t" style="left:968.8px;top:281.30px;font-size:15px;line-height:15px;color:#000;font-weight:400;transform:scaleX(0.96);transform-origin:0 0;">Favoritos Espaciais Painel</div>
<div class="cb" style="left:944px;top:307px;width:18px;height:18px;border-color:#c0c0c0"></div>
<div class="t" style="left:968.8px;top:309.30px;font-size:15px;line-height:15px;color:#000;font-weight:400;transform:scaleX(0.96);transform-origin:0 0;">Ferramentas GRASS Painel</div>
<div class="cb" style="left:944px;top:335px;width:18px;height:18px;border-color:#c0c0c0"></div>
<div class="t" style="left:968.8px;top:337.30px;font-size:15px;line-height:15px;color:#000;font-weight:400;transform:scaleX(0.96);transform-origin:0 0;">Informação do GPS Painel</div>
<div class="cb" style="left:944px;top:363px;width:18px;height:18px;border-color:#c0c0c0"></div>
<div class="t" style="left:968.8px;top:365.30px;font-size:15px;line-height:15px;color:#000;font-weight:400;transform:scaleX(0.96);transform-origin:0 0;">Navegador (2) Painel</div>
<div class="cb" style="left:944px;top:391px;width:18px;height:18px;border-color:#c0c0c0"></div>
<div class="t" style="left:968.8px;top:393.30px;font-size:15px;line-height:15px;color:#000;font-weight:400;transform:scaleX(0.96);transform-origin:0 0;">Navegador Painel</div>
<div class="cb" style="left:944px;top:419px;width:18px;height:18px;border-color:#c0c0c0"></div>
<div class="t" style="left:968.8px;top:421.30px;font-size:15px;line-height:15px;color:#000;font-weight:400;transform:scaleX(0.96);transform-origin:0 0;">Ordem de camada Painel</div>
<div class="cb" style="left:944px;top:447px;width:18px;height:18px;border-color:#c0c0c0"></div>
<div class="t" style="left:968.8px;top:449.30px;font-size:15px;line-height:15px;color:#000;font-weight:400;transform:scaleX(0.96);transform-origin:0 0;">Registro de menssagens Painel</div>
<svg style="left:943.00px;top:474.00px;" width="20" height="20" viewBox="0 0 24 24"><circle cx="11" cy="11" r="10" fill="#a9c4e6"/><ellipse cx="11" cy="11" rx="4" ry="10" fill="#d8e6f6"/><path d="M3 6c3 2 4 2 5 0M14 3c2 2 4 3 6 2M2 13c2 1 4 3 5 6M15 12c2 1 3 3 2 7" stroke="#6a6a6a" stroke-width="2.6" fill="none"/><rect x="14" y="15" width="9" height="9" rx="1" fill="#3f9a4a"/><circle cx="18" cy="19" r="2.2" fill="none" stroke="#fff" stroke-width="1.2"/><path d="M19.5 20.5l2 2" stroke="#fff" stroke-width="1.2"/></svg>
<div class="t" style="left:968.8px;top:477.30px;font-size:15px;line-height:15px;color:#000;font-weight:400;transform:scaleX(0.96);transform-origin:0 0;">Search QMS Painel</div>
<div class="cb" style="left:944px;top:503px;width:18px;height:18px;border-color:#c0c0c0"></div>
<div class="t" style="left:968.8px;top:505.30px;font-size:15px;line-height:15px;color:#000;font-weight:400;transform:scaleX(0.96);transform-origin:0 0;">Visão geral Painel</div>
<div class="cb" style="left:944px;top:531px;width:18px;height:18px;border-color:#c0c0c0"></div>
<div class="t" style="left:968.8px;top:533.30px;font-size:15px;line-height:15px;color:#000;font-weight:400;transform:scaleX(0.96);transform-origin:0 0;">Visualizador de resultados Painel</div>
<div style="position:absolute;left:942px;top:554px;width:480px;height:1px;background:#d0d0d0"></div>
<div class="t" style="left:1111.4px;top:560.45px;font-size:14px;line-height:14px;color:#000;font-weight:700;transform:scaleX(1);transform-origin:0 0;">Barra de Ferramentas</div>
<div class="cb" style="left:944px;top:583px;width:18px;height:18px;border-color:#c0c0c0"></div>
<svg style="left:945.00px;top:584.00px;" width="16" height="16" viewBox="0 0 24 24"><path d="M4.8 11.6L10.6 20.2L18.8 4.2" fill="none" stroke="#000" stroke-width="3.3" stroke-linejoin="round" stroke-linecap="round"/></svg>
<div class="t" style="left:968.8px;top:585.30px;font-size:15px;line-height:15px;color:#000;font-weight:400;transform:scaleX(0.96);transform-origin:0 0;">Ajuda</div>
<div class="cb" style="left:944px;top:611px;width:18px;height:18px;border-color:#c0c0c0"></div>
<svg style="left:945.00px;top:612.00px;" width="16" height="16" viewBox="0 0 24 24"><path d="M4.8 11.6L10.6 20.2L18.8 4.2" fill="none" stroke="#000" stroke-width="3.3" stroke-linejoin="round" stroke-linecap="round"/></svg>
<div class="t" style="left:968.8px;top:613.30px;font-size:15px;line-height:15px;color:#000;font-weight:400;transform:scaleX(0.96);transform-origin:0 0;">ArcheoCAD</div>
<div class="cb" style="left:944px;top:639px;width:18px;height:18px;border-color:#c0c0c0"></div>
<svg style="left:945.00px;top:640.00px;" width="16" height="16" viewBox="0 0 24 24"><path d="M4.8 11.6L10.6 20.2L18.8 4.2" fill="none" stroke="#000" stroke-width="3.3" stroke-linejoin="round" stroke-linecap="round"/></svg>
<div class="t" style="left:968.8px;top:641.30px;font-size:15px;line-height:15px;color:#000;font-weight:400;transform:scaleX(0.96);transform-origin:0 0;">Atributos</div>
<div class="cb" style="left:944px;top:667px;width:18px;height:18px;border-color:#c0c0c0"></div>
<svg style="left:945.00px;top:668.00px;" width="16" height="16" viewBox="0 0 24 24"><path d="M4.8 11.6L10.6 20.2L18.8 4.2" fill="none" stroke="#000" stroke-width="3.3" stroke-linejoin="round" stroke-linecap="round"/></svg>
<div class="t" style="left:968.8px;top:669.30px;font-size:15px;line-height:15px;color:#000;font-weight:400;transform:scaleX(0.96);transform-origin:0 0;">Barra de Ferramentas do Gerenciador de Fonte de Dados</div>
<div class="cb" style="left:944px;top:695px;width:18px;height:18px;border-color:#c0c0c0"></div>
<svg style="left:945.00px;top:696.00px;" width="16" height="16" viewBox="0 0 24 24"><path d="M4.8 11.6L10.6 20.2L18.8 4.2" fill="none" stroke="#000" stroke-width="3.3" stroke-linejoin="round" stroke-linecap="round"/></svg>
<div class="t" style="left:968.8px;top:697.30px;font-size:15px;line-height:15px;color:#000;font-weight:400;transform:scaleX(0.96);transform-origin:0 0;">Barra de ferramentas do Projeto</div>
<div class="cb" style="left:944px;top:723px;width:18px;height:18px;border-color:#c0c0c0"></div>
<div class="t" style="left:968.8px;top:725.30px;font-size:15px;line-height:15px;color:#000;font-weight:400;transform:scaleX(0.96);transform-origin:0 0;">Base de dados</div>
<div class="cb" style="left:944px;top:751px;width:18px;height:18px;border-color:#c0c0c0"></div>
<svg style="left:945.00px;top:752.00px;" width="16" height="16" viewBox="0 0 24 24"><path d="M4.8 11.6L10.6 20.2L18.8 4.2" fill="none" stroke="#000" stroke-width="3.3" stroke-linejoin="round" stroke-linecap="round"/></svg>
<div class="t" style="left:968.8px;top:753.30px;font-size:15px;line-height:15px;color:#000;font-weight:400;transform:scaleX(0.96);transform-origin:0 0;">Complementos</div>
<div class="cb" style="left:944px;top:779px;width:18px;height:18px;border-color:#c0c0c0"></div>
<svg style="left:945.00px;top:780.00px;" width="16" height="16" viewBox="0 0 24 24"><path d="M4.8 11.6L10.6 20.2L18.8 4.2" fill="none" stroke="#000" stroke-width="3.3" stroke-linejoin="round" stroke-linecap="round"/></svg>
<div class="t" style="left:968.8px;top:781.30px;font-size:15px;line-height:15px;color:#000;font-weight:400;transform:scaleX(0.96);transform-origin:0 0;">DataPlotly</div>
<div class="cb" style="left:944px;top:807px;width:18px;height:18px;border-color:#c0c0c0"></div>
<div class="t" style="left:968.8px;top:809.30px;font-size:15px;line-height:15px;color:#000;font-weight:400;transform:scaleX(0.96);transform-origin:0 0;">Digitalização Avançada</div>
<div class="cb" style="left:944px;top:835px;width:18px;height:18px;border-color:#c0c0c0"></div>
<svg style="left:945.00px;top:836.00px;" width="16" height="16" viewBox="0 0 24 24"><path d="M4.8 11.6L10.6 20.2L18.8 4.2" fill="none" stroke="#000" stroke-width="3.3" stroke-linejoin="round" stroke-linecap="round"/></svg>
<div class="t" style="left:968.8px;top:837.30px;font-size:15px;line-height:15px;color:#000;font-weight:400;transform:scaleX(0.96);transform-origin:0 0;">Digitalizar</div>
<div class="cb" style="left:944px;top:863px;width:18px;height:18px;border-color:#c0c0c0"></div>
<svg style="left:945.00px;top:864.00px;" width="16" height="16" viewBox="0 0 24 24"><path d="M4.8 11.6L10.6 20.2L18.8 4.2" fill="none" stroke="#000" stroke-width="3.3" stroke-linejoin="round" stroke-linecap="round"/></svg>
<div class="t" style="left:968.8px;top:865.30px;font-size:15px;line-height:15px;color:#000;font-weight:400;transform:scaleX(0.96);transform-origin:0 0;">DsgTools</div>
<div class="cb" style="left:944px;top:891px;width:18px;height:18px;border-color:#c0c0c0"></div>
<svg style="left:945.00px;top:892.00px;" width="16" height="16" viewBox="0 0 24 24"><path d="M4.8 11.6L10.6 20.2L18.8 4.2" fill="none" stroke="#000" stroke-width="3.3" stroke-linejoin="round" stroke-linecap="round"/></svg>
<div class="t" style="left:968.8px;top:893.30px;font-size:15px;line-height:15px;color:#000;font-weight:400;transform:scaleX(0.96);transform-origin:0 0;">Ferramentas de aderência</div>
<div class="cb" style="left:944px;top:919px;width:18px;height:18px;border-color:#c0c0c0"></div>
<svg style="left:945.00px;top:920.00px;" width="16" height="16" viewBox="0 0 24 24"><path d="M4.8 11.6L10.6 20.2L18.8 4.2" fill="none" stroke="#000" stroke-width="3.3" stroke-linejoin="round" stroke-linecap="round"/></svg>
<div class="t" style="left:968.8px;top:921.30px;font-size:15px;line-height:15px;color:#000;font-weight:400;transform:scaleX(0.96);transform-origin:0 0;">Ferramentas de digitalização de forma</div>
<div class="cb" style="left:944px;top:947px;width:18px;height:18px;border-color:#c0c0c0"></div>
<div class="t" style="left:968.8px;top:949.30px;font-size:15px;line-height:15px;color:#000;font-weight:400;transform:scaleX(0.96);transform-origin:0 0;">Gerenciar camadas</div>
<div class="cb" style="left:944px;top:975px;width:18px;height:18px;border-color:#c0c0c0"></div>
<svg style="left:945.00px;top:976.00px;" width="16" height="16" viewBox="0 0 24 24"><path d="M4.8 11.6L10.6 20.2L18.8 4.2" fill="none" stroke="#000" stroke-width="3.3" stroke-linejoin="round" stroke-linecap="round"/></svg>
<div class="t" style="left:968.8px;top:977.30px;font-size:15px;line-height:15px;color:#000;font-weight:400;transform:scaleX(0.96);transform-origin:0 0;">GRASS</div>
<div class="cb" style="left:944px;top:1003px;width:18px;height:18px;border-color:#c0c0c0"></div>
<svg style="left:945.00px;top:1004.00px;" width="16" height="16" viewBox="0 0 24 24"><path d="M4.8 11.6L10.6 20.2L18.8 4.2" fill="none" stroke="#000" stroke-width="3.3" stroke-linejoin="round" stroke-linecap="round"/></svg>
<div class="t" style="left:968.8px;top:1005.30px;font-size:15px;line-height:15px;color:#000;font-weight:400;transform:scaleX(0.96);transform-origin:0 0;">Mapa de Navegação</div>
<div class="cb" style="left:944px;top:1031px;width:18px;height:18px;border-color:#c0c0c0"></div>
<svg style="left:945.00px;top:1032.00px;" width="16" height="16" viewBox="0 0 24 24"><path d="M4.8 11.6L10.6 20.2L18.8 4.2" fill="none" stroke="#000" stroke-width="3.3" stroke-linejoin="round" stroke-linecap="round"/></svg>
<div class="t" style="left:968.8px;top:1033.30px;font-size:15px;line-height:15px;color:#000;font-weight:400;transform:scaleX(0.96);transform-origin:0 0;">OSMDownloader</div>
<div class="cb" style="left:1436px;top:5px;width:18px;height:18px;border-color:#c0c0c0"></div>
<div class="t" style="left:1460.6px;top:7.30px;font-size:15px;line-height:15px;color:#000;font-weight:400;transform:scaleX(0.96);transform-origin:0 0;">Raster</div>
<div class="cb" style="left:1436px;top:33px;width:18px;height:18px;border-color:#c0c0c0"></div>
<svg style="left:1437.00px;top:34.00px;" width="16" height="16" viewBox="0 0 24 24"><path d="M4.8 11.6L10.6 20.2L18.8 4.2" fill="none" stroke="#000" stroke-width="3.3" stroke-linejoin="round" stroke-linecap="round"/></svg>
<div class="t" style="left:1460.6px;top:35.30px;font-size:15px;line-height:15px;color:#000;font-weight:400;transform:scaleX(0.96);transform-origin:0 0;">Rótulo</div>
<div class="cb" style="left:1436px;top:61px;width:18px;height:18px;border-color:#c0c0c0"></div>
<svg style="left:1437.00px;top:62.00px;" width="16" height="16" viewBox="0 0 24 24"><path d="M4.8 11.6L10.6 20.2L18.8 4.2" fill="none" stroke="#000" stroke-width="3.3" stroke-linejoin="round" stroke-linecap="round"/></svg>
<div class="t" style="left:1460.6px;top:63.30px;font-size:15px;line-height:15px;color:#000;font-weight:400;transform:scaleX(0.96);transform-origin:0 0;">Vetor</div>
<div class="cb" style="left:1436px;top:89px;width:18px;height:18px;border-color:#c0c0c0"></div>
<svg style="left:1437.00px;top:90.00px;" width="16" height="16" viewBox="0 0 24 24"><path d="M4.8 11.6L10.6 20.2L18.8 4.2" fill="none" stroke="#000" stroke-width="3.3" stroke-linejoin="round" stroke-linecap="round"/></svg>
<div class="t" style="left:1460.6px;top:91.30px;font-size:15px;line-height:15px;color:#000;font-weight:400;transform:scaleX(0.96);transform-origin:0 0;">Web</div>
<div style="position:absolute;left:925px;top:9px;width:370px;height:50.6px;border:8px solid #dd0022;border-radius:11px;box-sizing:border-box"></div>
</body></html>
